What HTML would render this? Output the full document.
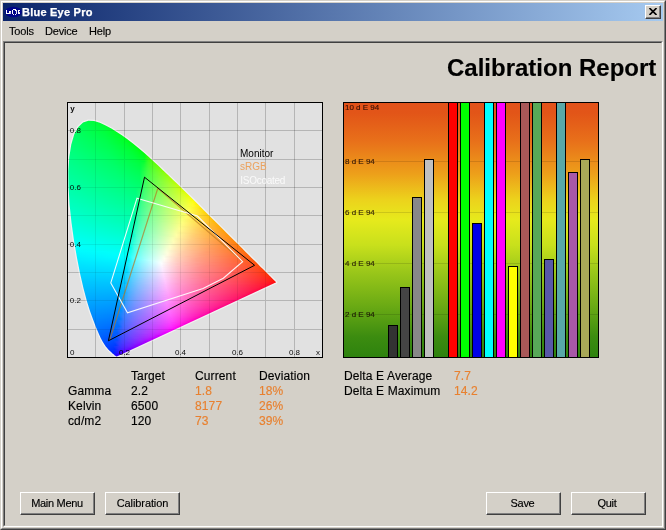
<!DOCTYPE html>
<html><head><meta charset="utf-8"><title>Blue Eye Pro</title>
<style>
html,body{margin:0;padding:0}
body{width:666px;height:530px;background:#d4d0c8;position:relative;overflow:hidden;font-family:"Liberation Sans",sans-serif;font-size:11px;color:#000}
.a{position:absolute}
.t,.btn,svg{will-change:transform}
.t,.btn{-webkit-text-stroke:0.15px currentColor}
.t{position:absolute;white-space:nowrap;line-height:1}
.o{color:#e8802f}
.r{font-size:12px;letter-spacing:0.12px}
.btn{letter-spacing:-0.3px;position:absolute;width:75px;height:23px;box-sizing:border-box;background:#d4d0c8;border:1px solid;border-color:#fff #404040 #404040 #fff;box-shadow:inset -1px -1px 0 #808080;text-align:center;line-height:21px;font-size:11px}
.bar{position:absolute;width:10px;box-sizing:border-box;border:1px solid #000;border-bottom:none}
</style></head><body>
<!-- window frame -->
<div class="a" style="left:0;top:0;width:666px;height:530px;box-sizing:border-box;border:1px solid;border-color:#d4d0c8 #404040 #404040 #d4d0c8"></div>
<div class="a" style="left:1px;top:1px;width:664px;height:528px;box-sizing:border-box;border:1px solid;border-color:#fff #808080 #808080 #fff"></div>
<!-- title bar -->
<div class="a" style="left:3px;top:3px;width:660px;height:18px;background:linear-gradient(90deg,#0a246a,#a6caf0)"></div>
<svg class="a" style="left:4px;top:5px" width="20" height="14" viewBox="4 5 20 14"><ellipse cx="13.4" cy="12" rx="8.5" ry="5.2" fill="#00058a"/><g fill="#fff" shape-rendering="crispEdges"><rect x="6" y="10" width="1" height="4"/><rect x="6" y="13" width="3" height="1"/><rect x="9" y="11" width="2" height="1"/><rect x="9" y="12" width="1" height="2"/><rect x="10" y="12" width="1" height="2" opacity=".8"/><rect x="13" y="9" width="3" height="1"/><rect x="12" y="10" width="1" height="4"/><rect x="15" y="10" width="1" height="1"/><rect x="13" y="14" width="1" height="1"/><rect x="15" y="14" width="1" height="1"/><rect x="16" y="10" width="1" height="4" opacity=".9"/><rect x="18" y="10" width="2" height="1"/><rect x="18" y="11" width="1" height="3"/><rect x="19" y="12" width="1" height="1" opacity=".8"/><rect x="18" y="13" width="2" height="1"/></g></svg>
<div class="t" id="ttl" style="left:21.5px;top:7px;-webkit-text-stroke:0.25px #fff;font-size:11px;font-weight:bold;color:#fff;letter-spacing:0.23px">Blue Eye Pro</div>
<!-- close button -->
<div class="a" style="left:645px;top:5px;width:16px;height:14px;box-sizing:border-box;background:#d4d0c8;border:1px solid;border-color:#fff #404040 #404040 #fff;box-shadow:inset -1px -1px 0 #808080"></div>
<svg class="a" style="left:649px;top:8px" width="8" height="7" viewBox="0 0 8 7"><path d="M0.5 0L7.5 7M7.5 0L0.5 7" stroke="#000" stroke-width="1.6" fill="none"/></svg>
<!-- menu -->
<div class="t" id="m1" style="letter-spacing:-0.2px;left:9px;top:26px">Tools</div>
<div class="t" id="m2" style="letter-spacing:-0.2px;left:45px;top:26px">Device</div>
<div class="t" id="m3" style="letter-spacing:-0.2px;left:89px;top:26px">Help</div>
<!-- client sunken -->
<div class="a" style="left:3px;top:41px;width:660px;height:486px;box-sizing:border-box;border:1px solid;border-color:#808080 #fff #fff #808080"></div>
<div class="a" style="left:4px;top:42px;width:658px;height:484px;box-sizing:border-box;border:1px solid;border-color:#404040 #d4d0c8 #d4d0c8 #404040"></div>
<div class="t" id="h1" style="right:10px;top:56px;font-size:24px;font-weight:bold">Calibration Report</div>
<!-- CIE chart -->
<svg class="a" style="left:67px;top:102px" width="256" height="256" viewBox="0 0 256 256">
<rect x="0" y="0" width="256" height="256" fill="#e1e1e1"/>
<g stroke="#000" stroke-opacity="0.125" stroke-width="1" shape-rendering="crispEdges">
<path d="M28.5 0V256M0 28.5H256"/><path d="M57.5 0V256M0 57.5H256"/><path d="M85.5 0V256M0 85.5H256"/><path d="M113.5 0V256M0 113.5H256"/><path d="M142.5 0V256M0 142.5H256"/><path d="M170.5 0V256M0 170.5H256"/><path d="M198.5 0V256M0 198.5H256"/><path d="M227.5 0V256M0 227.5H256"/>
</g>
<defs><clipPath id="hs"><path d="M49.8 254.4 L49.0 254.3 L48.3 253.8 L48.1 253.6 L47.8 253.4 L47.4 253.0 L47.1 252.7 L46.6 252.3 L46.1 251.9 L45.5 251.4 L44.8 250.8 L44.1 250.1 L43.2 249.3 L42.3 248.4 L41.3 247.4 L40.1 246.1 L38.8 244.5 L37.3 242.2 L35.6 239.4 L33.6 235.7 L31.5 231.1 L29.0 225.3 L26.3 218.1 L23.1 209.3 L19.8 198.7 L16.5 186.3 L13.2 171.9 L10.0 155.8 L7.0 138.4 L4.5 120.5 L2.6 102.7 L1.6 85.6 L1.4 69.6 L2.3 55.0 L4.3 42.4 L7.3 32.3 L11.4 24.9 L16.1 20.4 L21.4 18.7 L27.0 19.0 L32.8 20.8 L38.6 23.5 L44.3 26.6 L49.8 30.0 L55.2 33.5 L60.4 37.3 L65.6 41.3 L70.8 45.5 L75.9 49.8 L81.0 54.3 L86.1 58.9 L91.1 63.6 L96.2 68.4 L101.3 73.3 L106.4 78.2 L111.5 83.1 L116.5 88.1 L121.6 93.1 L126.6 98.0 L131.6 103.0 L136.5 107.9 L141.3 112.7 L146.1 117.4 L150.7 122.1 L155.2 126.6 L159.6 130.9 L163.9 135.2 L167.9 139.2 L171.8 143.0 L175.3 146.6 L178.6 149.9 L181.7 153.0 L184.6 155.9 L187.3 158.5 L189.7 160.8 L191.8 162.9 L193.7 164.9 L195.4 166.6 L197.0 168.1 L198.3 169.5 L199.6 170.7 L200.6 171.8 L201.6 172.8 L202.5 173.7 L203.4 174.5 L204.1 175.2 L204.8 175.9 L206.8 177.9 L207.9 179.0 L209.2 180.3Z"/></clipPath><linearGradient id="g0" gradientUnits="userSpaceOnUse" x1="19.5" x2="27.5"><stop offset="0" stop-color="#00ff46"/><stop offset="1" stop-color="#00ff3a"/></linearGradient><linearGradient id="g1" gradientUnits="userSpaceOnUse" x1="16.5" x2="31.0"><stop offset="0" stop-color="#00ff4b"/><stop offset="1" stop-color="#00ff36"/></linearGradient><linearGradient id="g2" gradientUnits="userSpaceOnUse" x1="15.0" x2="34.0"><stop offset="0" stop-color="#00ff4f"/><stop offset="1" stop-color="#00ff32"/></linearGradient><linearGradient id="g3" gradientUnits="userSpaceOnUse" x1="13.5" x2="36.0"><stop offset="0" stop-color="#00ff52"/><stop offset="1" stop-color="#00ff30"/></linearGradient><linearGradient id="g4" gradientUnits="userSpaceOnUse" x1="12.5" x2="38.5"><stop offset="0" stop-color="#00ff54"/><stop offset="0.769" stop-color="#00ff39"/><stop offset="1" stop-color="#00ff2d"/></linearGradient><linearGradient id="g5" gradientUnits="userSpaceOnUse" x1="11.5" x2="40.5"><stop offset="0" stop-color="#00ff57"/><stop offset="0.828" stop-color="#00ff36"/><stop offset="1" stop-color="#00ff2b"/></linearGradient><linearGradient id="g6" gradientUnits="userSpaceOnUse" x1="10.5" x2="42.0"><stop offset="0" stop-color="#00ff59"/><stop offset="0.762" stop-color="#00ff39"/><stop offset="1" stop-color="#00ff2a"/></linearGradient><linearGradient id="g7" gradientUnits="userSpaceOnUse" x1="10.0" x2="44.0"><stop offset="0" stop-color="#00ff5b"/><stop offset="0.706" stop-color="#00ff3c"/><stop offset="1" stop-color="#00ff28"/></linearGradient><linearGradient id="g8" gradientUnits="userSpaceOnUse" x1="9.5" x2="45.5"><stop offset="0" stop-color="#00ff5d"/><stop offset="0.778" stop-color="#00ff38"/><stop offset="1" stop-color="#00ff26"/></linearGradient><linearGradient id="g9" gradientUnits="userSpaceOnUse" x1="9.0" x2="47.5"><stop offset="0" stop-color="#00ff5e"/><stop offset="0.727" stop-color="#00ff3b"/><stop offset="1" stop-color="#00ff24"/></linearGradient><linearGradient id="g10" gradientUnits="userSpaceOnUse" x1="8.5" x2="49.0"><stop offset="0" stop-color="#00ff60"/><stop offset="0.691" stop-color="#00ff3e"/><stop offset="1" stop-color="#0f2"/></linearGradient><linearGradient id="g11" gradientUnits="userSpaceOnUse" x1="8.0" x2="50.5"><stop offset="0" stop-color="#00ff62"/><stop offset="0.753" stop-color="#00ff3a"/><stop offset="1" stop-color="#00ff21"/></linearGradient><linearGradient id="g12" gradientUnits="userSpaceOnUse" x1="7.5" x2="52.0"><stop offset="0" stop-color="#00ff64"/><stop offset="0.719" stop-color="#00ff3c"/><stop offset="1" stop-color="#00ff1f"/></linearGradient><linearGradient id="g13" gradientUnits="userSpaceOnUse" x1="6.5" x2="53.5"><stop offset="0" stop-color="#0f6"/><stop offset="0.681" stop-color="#00ff40"/><stop offset="0.936" stop-color="#00ff27"/><stop offset="1" stop-color="#00ff1e"/></linearGradient><linearGradient id="g14" gradientUnits="userSpaceOnUse" x1="6.5" x2="55.0"><stop offset="0" stop-color="#00ff67"/><stop offset="0.66" stop-color="#00ff42"/><stop offset="0.99" stop-color="#00ff1e"/><stop offset="1" stop-color="#00ff1c"/></linearGradient><linearGradient id="g15" gradientUnits="userSpaceOnUse" x1="6.0" x2="56.5"><stop offset="0" stop-color="#00ff69"/><stop offset="0.634" stop-color="#0f4"/><stop offset="0.871" stop-color="#00ff2e"/><stop offset="1" stop-color="#00ff1a"/></linearGradient><linearGradient id="g16" gradientUnits="userSpaceOnUse" x1="6.0" x2="58.0"><stop offset="0" stop-color="#00ff6a"/><stop offset="0.615" stop-color="#00ff46"/><stop offset="0.923" stop-color="#00ff27"/><stop offset="1" stop-color="#00ff18"/></linearGradient><linearGradient id="g17" gradientUnits="userSpaceOnUse" x1="5.5" x2="59.5"><stop offset="0" stop-color="#00ff6c"/><stop offset="0.667" stop-color="#00ff43"/><stop offset="0.963" stop-color="#00ff1f"/><stop offset="1" stop-color="#00ff16"/></linearGradient><linearGradient id="g18" gradientUnits="userSpaceOnUse" x1="5.0" x2="61.0"><stop offset="0" stop-color="#00ff6d"/><stop offset="0.571" stop-color="#00ff4b"/><stop offset="0.857" stop-color="#00ff2f"/><stop offset="1" stop-color="#00ff13"/></linearGradient><linearGradient id="g19" gradientUnits="userSpaceOnUse" x1="5.0" x2="62.0"><stop offset="0" stop-color="#00ff6e"/><stop offset="0.561" stop-color="#00ff4d"/><stop offset="0.842" stop-color="#00ff31"/><stop offset="0.982" stop-color="#00ff19"/><stop offset="1" stop-color="#00ff13"/></linearGradient><linearGradient id="g20" gradientUnits="userSpaceOnUse" x1="4.5" x2="63.5"><stop offset="0" stop-color="#00ff70"/><stop offset="0.61" stop-color="#00ff4a"/><stop offset="0.881" stop-color="#00ff2b"/><stop offset="0.949" stop-color="#00ff1f"/><stop offset="1" stop-color="#00ff10"/></linearGradient><linearGradient id="g21" gradientUnits="userSpaceOnUse" x1="4.0" x2="64.5"><stop offset="0" stop-color="#00ff72"/><stop offset="0.595" stop-color="#00ff4c"/><stop offset="0.86" stop-color="#00ff2f"/><stop offset="0.992" stop-color="#00ff14"/><stop offset="1" stop-color="#0f1"/></linearGradient><linearGradient id="g22" gradientUnits="userSpaceOnUse" x1="4.0" x2="66.0"><stop offset="0" stop-color="#00ff73"/><stop offset="0.581" stop-color="#00ff4e"/><stop offset="0.903" stop-color="#00ff28"/><stop offset="1" stop-color="#00ff0d"/></linearGradient><linearGradient id="g23" gradientUnits="userSpaceOnUse" x1="3.5" x2="67.0"><stop offset="0" stop-color="#00ff74"/><stop offset="0.567" stop-color="#00ff50"/><stop offset="0.882" stop-color="#00ff2c"/><stop offset="0.945" stop-color="#00ff20"/><stop offset="1" stop-color="#00ff0d"/></linearGradient><linearGradient id="g24" gradientUnits="userSpaceOnUse" x1="3.5" x2="68.5"><stop offset="0" stop-color="#00ff75"/><stop offset="0.554" stop-color="#00ff52"/><stop offset="0.862" stop-color="#00ff2f"/><stop offset="0.985" stop-color="#0f1"/><stop offset="1" stop-color="#00ff07"/></linearGradient><linearGradient id="g25" gradientUnits="userSpaceOnUse" x1="3.5" x2="69.5"><stop offset="0" stop-color="#0f7"/><stop offset="0.606" stop-color="#00ff4e"/><stop offset="0.848" stop-color="#00ff31"/><stop offset="0.97" stop-color="#00ff17"/><stop offset="1" stop-color="#00ff08"/></linearGradient><linearGradient id="g26" gradientUnits="userSpaceOnUse" x1="3.0" x2="71.0"><stop offset="0" stop-color="#00ff78"/><stop offset="0.588" stop-color="#00ff50"/><stop offset="0.824" stop-color="#00ff35"/><stop offset="0.941" stop-color="#00ff1e"/><stop offset="1" stop-color="#0f0"/></linearGradient><linearGradient id="g27" gradientUnits="userSpaceOnUse" x1="3.0" x2="72.0"><stop offset="0" stop-color="#00ff79"/><stop offset="0.58" stop-color="#00ff52"/><stop offset="0.87" stop-color="#00ff2e"/><stop offset="0.928" stop-color="#0f2"/><stop offset="0.986" stop-color="#00ff0e"/><stop offset="1" stop-color="#0f0"/></linearGradient><linearGradient id="g28" gradientUnits="userSpaceOnUse" x1="3.0" x2="73.5"><stop offset="0" stop-color="#00ff7b"/><stop offset="0.567" stop-color="#00ff53"/><stop offset="0.851" stop-color="#00ff31"/><stop offset="0.965" stop-color="#00ff15"/><stop offset="1" stop-color="#0f0"/></linearGradient><linearGradient id="g29" gradientUnits="userSpaceOnUse" x1="2.5" x2="74.5"><stop offset="0" stop-color="#00ff7c"/><stop offset="0.556" stop-color="#00ff56"/><stop offset="0.833" stop-color="#00ff35"/><stop offset="0.944" stop-color="#00ff1d"/><stop offset="1" stop-color="#0f0"/></linearGradient><linearGradient id="g30" gradientUnits="userSpaceOnUse" x1="2.5" x2="75.5"><stop offset="0" stop-color="#00ff7d"/><stop offset="0.548" stop-color="#00ff57"/><stop offset="0.822" stop-color="#00ff37"/><stop offset="0.932" stop-color="#00ff21"/><stop offset="1" stop-color="#0f0"/></linearGradient><linearGradient id="g31" gradientUnits="userSpaceOnUse" x1="2.5" x2="77.0"><stop offset="0" stop-color="#00ff7e"/><stop offset="0.537" stop-color="#00ff59"/><stop offset="0.805" stop-color="#00ff3a"/><stop offset="0.913" stop-color="#00ff25"/><stop offset="0.966" stop-color="#00ff13"/><stop offset="1" stop-color="#0f0"/></linearGradient><linearGradient id="g32" gradientUnits="userSpaceOnUse" x1="2.0" x2="78.0"><stop offset="0" stop-color="#00ff80"/><stop offset="0.526" stop-color="#00ff5b"/><stop offset="0.789" stop-color="#00ff3d"/><stop offset="0.895" stop-color="#00ff2a"/><stop offset="0.947" stop-color="#00ff1b"/><stop offset="1" stop-color="#0f0"/></linearGradient><linearGradient id="g33" gradientUnits="userSpaceOnUse" x1="2.0" x2="79.0"><stop offset="0" stop-color="#00ff81"/><stop offset="0.519" stop-color="#00ff5d"/><stop offset="0.831" stop-color="#00ff37"/><stop offset="0.935" stop-color="#00ff20"/><stop offset="0.987" stop-color="#0f0"/><stop offset="1" stop-color="#18ff00"/></linearGradient><linearGradient id="g34" gradientUnits="userSpaceOnUse" x1="2.0" x2="80.5"><stop offset="0" stop-color="#00ff82"/><stop offset="0.51" stop-color="#00ff5e"/><stop offset="0.815" stop-color="#00ff39"/><stop offset="0.917" stop-color="#00ff24"/><stop offset="0.968" stop-color="#00ff0f"/><stop offset="1" stop-color="#2bff00"/></linearGradient><linearGradient id="g35" gradientUnits="userSpaceOnUse" x1="1.5" x2="81.5"><stop offset="0" stop-color="#00ff84"/><stop offset="0.5" stop-color="#00ff60"/><stop offset="0.8" stop-color="#00ff3d"/><stop offset="0.9" stop-color="#00ff29"/><stop offset="0.95" stop-color="#00ff19"/><stop offset="1" stop-color="#34ff00"/></linearGradient><linearGradient id="g36" gradientUnits="userSpaceOnUse" x1="1.5" x2="82.5"><stop offset="0" stop-color="#00ff85"/><stop offset="0.543" stop-color="#00ff5d"/><stop offset="0.79" stop-color="#00ff3f"/><stop offset="0.938" stop-color="#00ff1e"/><stop offset="0.988" stop-color="#35ff00"/><stop offset="1" stop-color="#3cff00"/></linearGradient><linearGradient id="g37" gradientUnits="userSpaceOnUse" x1="1.5" x2="83.5"><stop offset="0" stop-color="#00ff86"/><stop offset="0.537" stop-color="#00ff5f"/><stop offset="0.829" stop-color="#00ff39"/><stop offset="0.927" stop-color="#0f2"/><stop offset="0.976" stop-color="#36ff0b"/><stop offset="1" stop-color="#43ff00"/></linearGradient><linearGradient id="g38" gradientUnits="userSpaceOnUse" x1="1.5" x2="84.5"><stop offset="0" stop-color="#00ff87"/><stop offset="0.53" stop-color="#00ff60"/><stop offset="0.819" stop-color="#00ff3b"/><stop offset="0.916" stop-color="#06ff26"/><stop offset="0.964" stop-color="#37ff14"/><stop offset="1" stop-color="#49ff00"/></linearGradient><linearGradient id="g39" gradientUnits="userSpaceOnUse" x1="1.5" x2="86.0"><stop offset="0" stop-color="#0f8"/><stop offset="0.521" stop-color="#00ff62"/><stop offset="0.805" stop-color="#00ff3e"/><stop offset="0.852" stop-color="#00ff35"/><stop offset="0.899" stop-color="#0cff2a"/><stop offset="0.947" stop-color="#39ff1a"/><stop offset="1" stop-color="#52ff00"/></linearGradient><linearGradient id="g40" gradientUnits="userSpaceOnUse" x1="1.5" x2="87.0"><stop offset="0" stop-color="#00ff8a"/><stop offset="0.515" stop-color="#00ff63"/><stop offset="0.795" stop-color="#00ff40"/><stop offset="0.842" stop-color="#00ff37"/><stop offset="0.889" stop-color="#10ff2d"/><stop offset="0.936" stop-color="#3aff1f"/><stop offset="0.982" stop-color="#50ff00"/><stop offset="1" stop-color="#58ff00"/></linearGradient><linearGradient id="g41" gradientUnits="userSpaceOnUse" x1="1.0" x2="88.0"><stop offset="0" stop-color="#00ff8b"/><stop offset="0.552" stop-color="#00ff61"/><stop offset="0.828" stop-color="#00ff3b"/><stop offset="0.874" stop-color="#01ff31"/><stop offset="0.92" stop-color="#38ff25"/><stop offset="1" stop-color="#5dff00"/></linearGradient><linearGradient id="g42" gradientUnits="userSpaceOnUse" x1="1.0" x2="89.0"><stop offset="0" stop-color="#00ff8c"/><stop offset="0.5" stop-color="#00ff67"/><stop offset="0.773" stop-color="#00ff45"/><stop offset="0.818" stop-color="#00ff3e"/><stop offset="0.864" stop-color="#0bff34"/><stop offset="0.909" stop-color="#39ff29"/><stop offset="0.955" stop-color="#50ff18"/><stop offset="1" stop-color="#62ff00"/></linearGradient><linearGradient id="g43" gradientUnits="userSpaceOnUse" x1="1.0" x2="90.0"><stop offset="0" stop-color="#00ff8d"/><stop offset="0.494" stop-color="#00ff68"/><stop offset="0.764" stop-color="#00ff48"/><stop offset="0.809" stop-color="#00ff40"/><stop offset="0.854" stop-color="#0fff37"/><stop offset="0.899" stop-color="#3aff2c"/><stop offset="0.944" stop-color="#51ff1d"/><stop offset="0.989" stop-color="#63ff00"/><stop offset="1" stop-color="#67ff00"/></linearGradient><linearGradient id="g44" gradientUnits="userSpaceOnUse" x1="1.0" x2="91.0"><stop offset="0" stop-color="#00ff8e"/><stop offset="0.489" stop-color="#00ff6a"/><stop offset="0.756" stop-color="#00ff4a"/><stop offset="0.8" stop-color="#00ff42"/><stop offset="0.844" stop-color="#13ff3a"/><stop offset="0.889" stop-color="#3bff2f"/><stop offset="0.933" stop-color="#52ff22"/><stop offset="0.978" stop-color="#64ff05"/><stop offset="1" stop-color="#6cff00"/></linearGradient><linearGradient id="g45" gradientUnits="userSpaceOnUse" x1="1.0" x2="92.5"><stop offset="0" stop-color="#00ff90"/><stop offset="0.525" stop-color="#00ff67"/><stop offset="0.787" stop-color="#0f4"/><stop offset="0.831" stop-color="#16ff3c"/><stop offset="0.874" stop-color="#3cff32"/><stop offset="0.918" stop-color="#53ff26"/><stop offset="1" stop-color="#72ff00"/></linearGradient><linearGradient id="g46" gradientUnits="userSpaceOnUse" x1="1.0" x2="93.5"><stop offset="0" stop-color="#00ff91"/><stop offset="0.519" stop-color="#00ff69"/><stop offset="0.778" stop-color="#00ff47"/><stop offset="0.822" stop-color="#18ff3f"/><stop offset="0.865" stop-color="#3dff35"/><stop offset="0.951" stop-color="#66ff19"/><stop offset="1" stop-color="#7f0"/></linearGradient><linearGradient id="g47" gradientUnits="userSpaceOnUse" x1="1.0" x2="94.5"><stop offset="0" stop-color="#00ff92"/><stop offset="0.513" stop-color="#00ff6a"/><stop offset="0.77" stop-color="#00ff49"/><stop offset="0.813" stop-color="#1bff41"/><stop offset="0.856" stop-color="#3fff38"/><stop offset="0.941" stop-color="#67ff1e"/><stop offset="0.984" stop-color="#76ff00"/><stop offset="1" stop-color="#7bff00"/></linearGradient><linearGradient id="g48" gradientUnits="userSpaceOnUse" x1="1.0" x2="95.5"><stop offset="0" stop-color="#00ff93"/><stop offset="0.508" stop-color="#00ff6c"/><stop offset="0.762" stop-color="#00ff4b"/><stop offset="0.847" stop-color="#40ff3b"/><stop offset="0.931" stop-color="#67ff23"/><stop offset="0.974" stop-color="#77ff07"/><stop offset="1" stop-color="#80ff00"/></linearGradient><linearGradient id="g49" gradientUnits="userSpaceOnUse" x1="1.0" x2="96.5"><stop offset="0" stop-color="#00ff94"/><stop offset="0.503" stop-color="#00ff6d"/><stop offset="0.754" stop-color="#00ff4d"/><stop offset="0.838" stop-color="#41ff3d"/><stop offset="0.921" stop-color="#68ff27"/><stop offset="1" stop-color="#84ff00"/></linearGradient><linearGradient id="g50" gradientUnits="userSpaceOnUse" x1="0.5" x2="97.5"><stop offset="0" stop-color="#00ff96"/><stop offset="0.495" stop-color="#00ff6f"/><stop offset="0.742" stop-color="#00ff50"/><stop offset="0.784" stop-color="#1aff49"/><stop offset="0.825" stop-color="#3fff41"/><stop offset="0.907" stop-color="#67ff2c"/><stop offset="0.948" stop-color="#77ff1c"/><stop offset="0.99" stop-color="#85ff00"/><stop offset="1" stop-color="#8f0"/></linearGradient><linearGradient id="g51" gradientUnits="userSpaceOnUse" x1="0.5" x2="98.5"><stop offset="0" stop-color="#00ff97"/><stop offset="0.49" stop-color="#00ff71"/><stop offset="0.735" stop-color="#00ff52"/><stop offset="0.816" stop-color="#40ff43"/><stop offset="0.898" stop-color="#68ff30"/><stop offset="0.939" stop-color="#78ff21"/><stop offset="0.98" stop-color="#86ff00"/><stop offset="1" stop-color="#8cff00"/></linearGradient><linearGradient id="g52" gradientUnits="userSpaceOnUse" x1="0.5" x2="99.5"><stop offset="0" stop-color="#00ff98"/><stop offset="0.485" stop-color="#00ff72"/><stop offset="0.727" stop-color="#00ff54"/><stop offset="0.808" stop-color="#41ff46"/><stop offset="0.889" stop-color="#69ff33"/><stop offset="0.929" stop-color="#79ff26"/><stop offset="1" stop-color="#91ff00"/></linearGradient><linearGradient id="g53" gradientUnits="userSpaceOnUse" x1="0.5" x2="100.5"><stop offset="0" stop-color="#0f9"/><stop offset="0.48" stop-color="#00ff74"/><stop offset="0.72" stop-color="#00ff56"/><stop offset="0.8" stop-color="#42ff48"/><stop offset="0.88" stop-color="#6aff36"/><stop offset="0.92" stop-color="#7aff2a"/><stop offset="1" stop-color="#95ff00"/></linearGradient><linearGradient id="g54" gradientUnits="userSpaceOnUse" x1="0.5" x2="102.0"><stop offset="0" stop-color="#00ff9a"/><stop offset="0.473" stop-color="#00ff75"/><stop offset="0.709" stop-color="#00ff58"/><stop offset="0.788" stop-color="#43ff4a"/><stop offset="0.867" stop-color="#6bff39"/><stop offset="0.946" stop-color="#88ff1d"/><stop offset="0.985" stop-color="#96ff00"/><stop offset="1" stop-color="#9aff00"/></linearGradient><linearGradient id="g55" gradientUnits="userSpaceOnUse" x1="0.5" x2="103.0"><stop offset="0" stop-color="#00ff9c"/><stop offset="0.507" stop-color="#00ff73"/><stop offset="0.702" stop-color="#00ff5a"/><stop offset="0.78" stop-color="#44ff4d"/><stop offset="0.859" stop-color="#6cff3c"/><stop offset="0.937" stop-color="#89ff22"/><stop offset="0.976" stop-color="#96ff00"/><stop offset="1" stop-color="#9eff00"/></linearGradient><linearGradient id="g56" gradientUnits="userSpaceOnUse" x1="0.5" x2="104.0"><stop offset="0" stop-color="#00ff9d"/><stop offset="0.464" stop-color="#00ff78"/><stop offset="0.696" stop-color="#00ff5c"/><stop offset="0.773" stop-color="#46ff4f"/><stop offset="0.889" stop-color="#7cff34"/><stop offset="0.928" stop-color="#8aff27"/><stop offset="1" stop-color="#a2ff00"/></linearGradient><linearGradient id="g57" gradientUnits="userSpaceOnUse" x1="0.5" x2="105.0"><stop offset="0" stop-color="#00ff9e"/><stop offset="0.498" stop-color="#00ff76"/><stop offset="0.689" stop-color="#00ff5e"/><stop offset="0.727" stop-color="#28ff58"/><stop offset="0.766" stop-color="#47ff51"/><stop offset="0.88" stop-color="#7dff37"/><stop offset="0.919" stop-color="#8bff2b"/><stop offset="1" stop-color="#a6ff00"/></linearGradient><linearGradient id="g58" gradientUnits="userSpaceOnUse" x1="0.5" x2="106.0"><stop offset="0" stop-color="#00ff9f"/><stop offset="0.493" stop-color="#0f7"/><stop offset="0.682" stop-color="#00ff5f"/><stop offset="0.72" stop-color="#2aff59"/><stop offset="0.758" stop-color="#48ff53"/><stop offset="0.872" stop-color="#7eff3a"/><stop offset="0.948" stop-color="#99ff1e"/><stop offset="0.986" stop-color="#a6ff00"/><stop offset="1" stop-color="#af0"/></linearGradient><linearGradient id="g59" gradientUnits="userSpaceOnUse" x1="0.5" x2="107.0"><stop offset="0" stop-color="#00ffa0"/><stop offset="0.488" stop-color="#00ff79"/><stop offset="0.676" stop-color="#00ff61"/><stop offset="0.714" stop-color="#2bff5b"/><stop offset="0.751" stop-color="#49ff55"/><stop offset="0.864" stop-color="#7fff3d"/><stop offset="0.939" stop-color="#9aff23"/><stop offset="0.977" stop-color="#a7ff00"/><stop offset="1" stop-color="#aeff00"/></linearGradient><linearGradient id="g60" gradientUnits="userSpaceOnUse" x1="0.5" x2="108.0"><stop offset="0" stop-color="#00ffa2"/><stop offset="0.484" stop-color="#00ff7a"/><stop offset="0.67" stop-color="#00ff63"/><stop offset="0.707" stop-color="#2dff5d"/><stop offset="0.744" stop-color="#4aff57"/><stop offset="0.856" stop-color="#80ff40"/><stop offset="0.93" stop-color="#9bff28"/><stop offset="1" stop-color="#b2ff00"/></linearGradient><linearGradient id="g61" gradientUnits="userSpaceOnUse" x1="1.0" x2="109.0"><stop offset="0" stop-color="#00ffa3"/><stop offset="0.481" stop-color="#00ff7b"/><stop offset="0.667" stop-color="#00ff64"/><stop offset="0.704" stop-color="#33ff5f"/><stop offset="0.741" stop-color="#4eff58"/><stop offset="0.852" stop-color="#83ff41"/><stop offset="0.926" stop-color="#9eff2a"/><stop offset="1" stop-color="#b6ff00"/></linearGradient><linearGradient id="g62" gradientUnits="userSpaceOnUse" x1="1.0" x2="110.0"><stop offset="0" stop-color="#00ffa4"/><stop offset="0.514" stop-color="#00ff79"/><stop offset="0.661" stop-color="#0f6"/><stop offset="0.697" stop-color="#34ff61"/><stop offset="0.734" stop-color="#4fff5a"/><stop offset="0.844" stop-color="#84ff44"/><stop offset="0.917" stop-color="#9fff2e"/><stop offset="0.954" stop-color="#abff1d"/><stop offset="0.991" stop-color="#b7ff00"/><stop offset="1" stop-color="#baff00"/></linearGradient><linearGradient id="g63" gradientUnits="userSpaceOnUse" x1="1.0" x2="111.0"><stop offset="0" stop-color="#00ffa5"/><stop offset="0.473" stop-color="#00ff7e"/><stop offset="0.655" stop-color="#00ff68"/><stop offset="0.691" stop-color="#36ff62"/><stop offset="0.764" stop-color="#64ff56"/><stop offset="0.909" stop-color="#a0ff32"/><stop offset="0.945" stop-color="#acff22"/><stop offset="0.982" stop-color="#b8ff00"/><stop offset="1" stop-color="#bdff00"/></linearGradient><linearGradient id="g64" gradientUnits="userSpaceOnUse" x1="1.0" x2="112.0"><stop offset="0" stop-color="#00ffa6"/><stop offset="0.505" stop-color="#00ff7c"/><stop offset="0.649" stop-color="#00ff6a"/><stop offset="0.685" stop-color="#37ff64"/><stop offset="0.757" stop-color="#65ff58"/><stop offset="0.901" stop-color="#a1ff35"/><stop offset="0.937" stop-color="#adff27"/><stop offset="0.973" stop-color="#b9ff0d"/><stop offset="1" stop-color="#c1ff00"/></linearGradient><linearGradient id="g65" gradientUnits="userSpaceOnUse" x1="1.0" x2="113.0"><stop offset="0" stop-color="#00ffa7"/><stop offset="0.5" stop-color="#00ff7e"/><stop offset="0.643" stop-color="#00ff6c"/><stop offset="0.679" stop-color="#39ff66"/><stop offset="0.75" stop-color="#66ff5a"/><stop offset="0.893" stop-color="#a2ff38"/><stop offset="0.929" stop-color="#aeff2b"/><stop offset="1" stop-color="#c5ff00"/></linearGradient><linearGradient id="g66" gradientUnits="userSpaceOnUse" x1="1.0" x2="114.0"><stop offset="0" stop-color="#00ffa9"/><stop offset="0.496" stop-color="#00ff7f"/><stop offset="0.637" stop-color="#00ff6d"/><stop offset="0.673" stop-color="#3aff68"/><stop offset="0.708" stop-color="#54ff62"/><stop offset="0.85" stop-color="#96ff46"/><stop offset="0.92" stop-color="#afff2f"/><stop offset="0.956" stop-color="#bbff1e"/><stop offset="0.991" stop-color="#c6ff00"/><stop offset="1" stop-color="#c9ff00"/></linearGradient><linearGradient id="g67" gradientUnits="userSpaceOnUse" x1="1.0" x2="115.0"><stop offset="0" stop-color="#0fa"/><stop offset="0.526" stop-color="#00ff7d"/><stop offset="0.632" stop-color="#00ff6f"/><stop offset="0.667" stop-color="#3bff6a"/><stop offset="0.702" stop-color="#55ff64"/><stop offset="0.842" stop-color="#97ff48"/><stop offset="0.912" stop-color="#b0ff33"/><stop offset="0.947" stop-color="#bcff23"/><stop offset="0.982" stop-color="#c7ff00"/><stop offset="1" stop-color="#cdff00"/></linearGradient><linearGradient id="g68" gradientUnits="userSpaceOnUse" x1="1.0" x2="116.0"><stop offset="0" stop-color="#00ffab"/><stop offset="0.452" stop-color="#00ff86"/><stop offset="0.591" stop-color="#00ff76"/><stop offset="0.626" stop-color="#09ff71"/><stop offset="0.661" stop-color="#3dff6c"/><stop offset="0.73" stop-color="#69ff60"/><stop offset="0.87" stop-color="#a5ff42"/><stop offset="0.939" stop-color="#bdff28"/><stop offset="0.974" stop-color="#c9ff0e"/><stop offset="1" stop-color="#d1ff00"/></linearGradient><linearGradient id="g69" gradientUnits="userSpaceOnUse" x1="1.0" x2="117.0"><stop offset="0" stop-color="#00ffac"/><stop offset="0.448" stop-color="#0f8"/><stop offset="0.586" stop-color="#0f7"/><stop offset="0.621" stop-color="#0fff73"/><stop offset="0.655" stop-color="#3eff6e"/><stop offset="0.724" stop-color="#6aff62"/><stop offset="0.862" stop-color="#a6ff44"/><stop offset="0.931" stop-color="#beff2c"/><stop offset="1" stop-color="#d5ff00"/></linearGradient><linearGradient id="g70" gradientUnits="userSpaceOnUse" x1="1.0" x2="118.0"><stop offset="0" stop-color="#00ffad"/><stop offset="0.444" stop-color="#00ff89"/><stop offset="0.581" stop-color="#00ff79"/><stop offset="0.615" stop-color="#13ff74"/><stop offset="0.65" stop-color="#3fff70"/><stop offset="0.718" stop-color="#6bff64"/><stop offset="0.855" stop-color="#a7ff47"/><stop offset="0.923" stop-color="#bfff31"/><stop offset="0.957" stop-color="#cbff1f"/><stop offset="0.991" stop-color="#d6ff00"/><stop offset="1" stop-color="#d9ff00"/></linearGradient><linearGradient id="g71" gradientUnits="userSpaceOnUse" x1="1.0" x2="119.0"><stop offset="0" stop-color="#00ffaf"/><stop offset="0.475" stop-color="#00ff87"/><stop offset="0.576" stop-color="#00ff7b"/><stop offset="0.61" stop-color="#16ff76"/><stop offset="0.644" stop-color="#40ff71"/><stop offset="0.712" stop-color="#6cff67"/><stop offset="0.847" stop-color="#a8ff4a"/><stop offset="0.915" stop-color="#c0ff34"/><stop offset="0.949" stop-color="#ccff24"/><stop offset="0.983" stop-color="#d7ff00"/><stop offset="1" stop-color="#df0"/></linearGradient><linearGradient id="g72" gradientUnits="userSpaceOnUse" x1="1.0" x2="120.0"><stop offset="0" stop-color="#00ffb0"/><stop offset="0.471" stop-color="#00ff89"/><stop offset="0.571" stop-color="#00ff7d"/><stop offset="0.605" stop-color="#19ff78"/><stop offset="0.639" stop-color="#42ff73"/><stop offset="0.706" stop-color="#6dff68"/><stop offset="0.84" stop-color="#a9ff4d"/><stop offset="0.941" stop-color="#cdff29"/><stop offset="1" stop-color="#e1ff00"/></linearGradient><linearGradient id="g73" gradientUnits="userSpaceOnUse" x1="1.0" x2="121.0"><stop offset="0" stop-color="#00ffb1"/><stop offset="0.433" stop-color="#00ff8e"/><stop offset="0.567" stop-color="#00ff7e"/><stop offset="0.6" stop-color="#1cff7a"/><stop offset="0.633" stop-color="#43ff75"/><stop offset="0.7" stop-color="#6eff6a"/><stop offset="0.833" stop-color="#aaff4f"/><stop offset="0.933" stop-color="#ceff2e"/><stop offset="1" stop-color="#e5ff00"/></linearGradient><linearGradient id="g74" gradientUnits="userSpaceOnUse" x1="1.0" x2="122.0"><stop offset="0" stop-color="#00ffb2"/><stop offset="0.463" stop-color="#00ff8c"/><stop offset="0.562" stop-color="#00ff80"/><stop offset="0.595" stop-color="#1eff7c"/><stop offset="0.628" stop-color="#4f7"/><stop offset="0.694" stop-color="#70ff6c"/><stop offset="0.826" stop-color="#abff52"/><stop offset="0.926" stop-color="#cfff32"/><stop offset="0.959" stop-color="#dbff20"/><stop offset="0.992" stop-color="#e6ff00"/><stop offset="1" stop-color="#e9ff00"/></linearGradient><linearGradient id="g75" gradientUnits="userSpaceOnUse" x1="1.5" x2="123.5"><stop offset="0" stop-color="#00ffb3"/><stop offset="0.459" stop-color="#00ff8d"/><stop offset="0.557" stop-color="#00ff81"/><stop offset="0.623" stop-color="#49ff78"/><stop offset="0.689" stop-color="#73ff6e"/><stop offset="0.852" stop-color="#baff4b"/><stop offset="0.918" stop-color="#d2ff34"/><stop offset="0.951" stop-color="#ddff23"/><stop offset="0.984" stop-color="#e9ff00"/><stop offset="1" stop-color="#ef0"/></linearGradient><linearGradient id="g76" gradientUnits="userSpaceOnUse" x1="1.5" x2="124.5"><stop offset="0" stop-color="#00ffb5"/><stop offset="0.455" stop-color="#00ff8f"/><stop offset="0.553" stop-color="#00ff83"/><stop offset="0.585" stop-color="#29ff7e"/><stop offset="0.618" stop-color="#4aff7a"/><stop offset="0.683" stop-color="#74ff70"/><stop offset="0.846" stop-color="#bbff4d"/><stop offset="0.911" stop-color="#d3ff38"/><stop offset="0.943" stop-color="#dfff28"/><stop offset="0.976" stop-color="#eaff09"/><stop offset="1" stop-color="#f2ff00"/></linearGradient><linearGradient id="g77" gradientUnits="userSpaceOnUse" x1="1.5" x2="125.5"><stop offset="0" stop-color="#00ffb6"/><stop offset="0.452" stop-color="#00ff90"/><stop offset="0.548" stop-color="#00ff85"/><stop offset="0.581" stop-color="#2bff80"/><stop offset="0.613" stop-color="#4bff7c"/><stop offset="0.677" stop-color="#75ff72"/><stop offset="0.806" stop-color="#b0ff58"/><stop offset="0.903" stop-color="#d4ff3b"/><stop offset="0.935" stop-color="#e0ff2d"/><stop offset="1" stop-color="#f6ff00"/></linearGradient><linearGradient id="g78" gradientUnits="userSpaceOnUse" x1="1.5" x2="126.5"><stop offset="0" stop-color="#00ffb7"/><stop offset="0.448" stop-color="#00ff92"/><stop offset="0.544" stop-color="#00ff86"/><stop offset="0.576" stop-color="#2dff82"/><stop offset="0.608" stop-color="#4dff7e"/><stop offset="0.704" stop-color="#86ff6e"/><stop offset="0.864" stop-color="#caff4a"/><stop offset="0.928" stop-color="#e1ff31"/><stop offset="0.96" stop-color="#ecff1e"/><stop offset="0.992" stop-color="#f7ff00"/><stop offset="1" stop-color="#faff00"/></linearGradient><linearGradient id="g79" gradientUnits="userSpaceOnUse" x1="1.5" x2="127.5"><stop offset="0" stop-color="#00ffb9"/><stop offset="0.476" stop-color="#00ff90"/><stop offset="0.54" stop-color="#0f8"/><stop offset="0.571" stop-color="#2eff84"/><stop offset="0.603" stop-color="#4eff7f"/><stop offset="0.698" stop-color="#88ff70"/><stop offset="0.857" stop-color="#cbff4c"/><stop offset="0.921" stop-color="#e2ff35"/><stop offset="0.952" stop-color="#eeff24"/><stop offset="0.984" stop-color="#f9ff00"/><stop offset="1" stop-color="#feff00"/></linearGradient><linearGradient id="g80" gradientUnits="userSpaceOnUse" x1="1.5" x2="128.5"><stop offset="0" stop-color="#00ffba"/><stop offset="0.441" stop-color="#00ff95"/><stop offset="0.535" stop-color="#00ff8a"/><stop offset="0.567" stop-color="#30ff86"/><stop offset="0.598" stop-color="#4fff81"/><stop offset="0.693" stop-color="#89ff72"/><stop offset="0.85" stop-color="#ccff4f"/><stop offset="0.945" stop-color="#efff2a"/><stop offset="0.976" stop-color="#faff0b"/><stop offset="1" stop-color="#fffc00"/></linearGradient><linearGradient id="g81" gradientUnits="userSpaceOnUse" x1="1.5" x2="129.5"><stop offset="0" stop-color="#0fb"/><stop offset="0.438" stop-color="#00ff97"/><stop offset="0.531" stop-color="#00ff8b"/><stop offset="0.562" stop-color="#32ff87"/><stop offset="0.594" stop-color="#50ff83"/><stop offset="0.688" stop-color="#8aff74"/><stop offset="0.844" stop-color="#cdff52"/><stop offset="0.938" stop-color="#f0ff2e"/><stop offset="0.969" stop-color="#fcff17"/><stop offset="1" stop-color="#fff800"/></linearGradient><linearGradient id="g82" gradientUnits="userSpaceOnUse" x1="1.5" x2="130.5"><stop offset="0" stop-color="#00ffbc"/><stop offset="0.434" stop-color="#00ff98"/><stop offset="0.527" stop-color="#00ff8d"/><stop offset="0.558" stop-color="#33ff89"/><stop offset="0.589" stop-color="#51ff85"/><stop offset="0.651" stop-color="#7aff7b"/><stop offset="0.775" stop-color="#b5ff64"/><stop offset="0.899" stop-color="#e6ff41"/><stop offset="0.961" stop-color="#fdff1f"/><stop offset="0.992" stop-color="#fff600"/><stop offset="1" stop-color="#fff400"/></linearGradient><linearGradient id="g83" gradientUnits="userSpaceOnUse" x1="2.0" x2="131.5"><stop offset="0" stop-color="#00ffbe"/><stop offset="0.463" stop-color="#00ff96"/><stop offset="0.525" stop-color="#00ff8e"/><stop offset="0.556" stop-color="#39ff8a"/><stop offset="0.587" stop-color="#56ff86"/><stop offset="0.68" stop-color="#8eff78"/><stop offset="0.834" stop-color="#d1ff56"/><stop offset="0.927" stop-color="#f5ff35"/><stop offset="0.958" stop-color="#fffe23"/><stop offset="0.988" stop-color="#fff300"/><stop offset="1" stop-color="#fff000"/></linearGradient><linearGradient id="g84" gradientUnits="userSpaceOnUse" x1="2.0" x2="132.5"><stop offset="0" stop-color="#00ffbf"/><stop offset="0.46" stop-color="#00ff98"/><stop offset="0.521" stop-color="#00ff90"/><stop offset="0.552" stop-color="#3bff8c"/><stop offset="0.582" stop-color="#57ff88"/><stop offset="0.674" stop-color="#8fff7a"/><stop offset="0.858" stop-color="#dfff50"/><stop offset="0.92" stop-color="#f6ff39"/><stop offset="0.95" stop-color="#fffd28"/><stop offset="0.981" stop-color="#fff200"/><stop offset="1" stop-color="#ffec00"/></linearGradient><linearGradient id="g85" gradientUnits="userSpaceOnUse" x1="2.0" x2="133.5"><stop offset="0" stop-color="#00ffc0"/><stop offset="0.426" stop-color="#00ff9d"/><stop offset="0.517" stop-color="#00ff92"/><stop offset="0.548" stop-color="#3cff8e"/><stop offset="0.578" stop-color="#58ff8a"/><stop offset="0.669" stop-color="#90ff7c"/><stop offset="0.852" stop-color="#e0ff53"/><stop offset="0.913" stop-color="#f7ff3d"/><stop offset="0.943" stop-color="#fffb2d"/><stop offset="1" stop-color="#ffe800"/></linearGradient><linearGradient id="g86" gradientUnits="userSpaceOnUse" x1="2.0" x2="134.5"><stop offset="0" stop-color="#00ffc1"/><stop offset="0.423" stop-color="#00ff9e"/><stop offset="0.513" stop-color="#00ff94"/><stop offset="0.543" stop-color="#3eff90"/><stop offset="0.604" stop-color="#6eff87"/><stop offset="0.725" stop-color="#aeff73"/><stop offset="0.875" stop-color="#edff4c"/><stop offset="0.936" stop-color="#fffa31"/><stop offset="1" stop-color="#ffe500"/></linearGradient><linearGradient id="g87" gradientUnits="userSpaceOnUse" x1="2.0" x2="135.5"><stop offset="0" stop-color="#00ffc3"/><stop offset="0.449" stop-color="#00ff9d"/><stop offset="0.509" stop-color="#00ff95"/><stop offset="0.539" stop-color="#3fff91"/><stop offset="0.599" stop-color="#70ff89"/><stop offset="0.719" stop-color="#afff75"/><stop offset="0.869" stop-color="#efff4f"/><stop offset="0.899" stop-color="#faff44"/><stop offset="0.959" stop-color="#fe2"/><stop offset="0.989" stop-color="#ffe500"/><stop offset="1" stop-color="#ffe100"/></linearGradient><linearGradient id="g88" gradientUnits="userSpaceOnUse" x1="2.0" x2="136.5"><stop offset="0" stop-color="#00ffc4"/><stop offset="0.416" stop-color="#00ffa2"/><stop offset="0.476" stop-color="#00ff9b"/><stop offset="0.506" stop-color="#0bff97"/><stop offset="0.535" stop-color="#41ff93"/><stop offset="0.595" stop-color="#71ff8b"/><stop offset="0.714" stop-color="#b1ff77"/><stop offset="0.862" stop-color="#f0ff52"/><stop offset="0.892" stop-color="#fcff48"/><stop offset="0.952" stop-color="#ffed27"/><stop offset="0.981" stop-color="#ffe300"/><stop offset="1" stop-color="#ffde00"/></linearGradient><linearGradient id="g89" gradientUnits="userSpaceOnUse" x1="2.5" x2="137.5"><stop offset="0" stop-color="#00ffc5"/><stop offset="0.415" stop-color="#00ffa3"/><stop offset="0.474" stop-color="#00ff9c"/><stop offset="0.504" stop-color="#1cff98"/><stop offset="0.533" stop-color="#46ff95"/><stop offset="0.593" stop-color="#74ff8c"/><stop offset="0.711" stop-color="#b4ff78"/><stop offset="0.859" stop-color="#f3ff54"/><stop offset="0.889" stop-color="#ffff4a"/><stop offset="0.948" stop-color="#ffea29"/><stop offset="0.978" stop-color="#ffe10d"/><stop offset="1" stop-color="#ffda00"/></linearGradient><linearGradient id="g90" gradientUnits="userSpaceOnUse" x1="2.5" x2="138.5"><stop offset="0" stop-color="#00ffc7"/><stop offset="0.441" stop-color="#00ffa1"/><stop offset="0.471" stop-color="#00ff9e"/><stop offset="0.5" stop-color="#1fff9a"/><stop offset="0.529" stop-color="#47ff96"/><stop offset="0.588" stop-color="#75ff8e"/><stop offset="0.706" stop-color="#b5ff7b"/><stop offset="0.853" stop-color="#f4ff57"/><stop offset="0.882" stop-color="#fffe4d"/><stop offset="0.941" stop-color="#ffe92e"/><stop offset="1" stop-color="#ffd700"/></linearGradient><linearGradient id="g91" gradientUnits="userSpaceOnUse" x1="2.5" x2="139.5"><stop offset="0" stop-color="#00ffc8"/><stop offset="0.467" stop-color="#00ffa0"/><stop offset="0.496" stop-color="#21ff9c"/><stop offset="0.526" stop-color="#49ff98"/><stop offset="0.584" stop-color="#77ff90"/><stop offset="0.701" stop-color="#b6ff7d"/><stop offset="0.847" stop-color="#f6ff5a"/><stop offset="0.876" stop-color="#fffc4f"/><stop offset="0.934" stop-color="#ffe732"/><stop offset="0.964" stop-color="#ffde1e"/><stop offset="0.993" stop-color="#ffd600"/><stop offset="1" stop-color="#ffd400"/></linearGradient><linearGradient id="g92" gradientUnits="userSpaceOnUse" x1="2.5" x2="140.5"><stop offset="0" stop-color="#00ffc9"/><stop offset="0.435" stop-color="#00ffa5"/><stop offset="0.464" stop-color="#00ffa1"/><stop offset="0.522" stop-color="#4aff9a"/><stop offset="0.58" stop-color="#78ff92"/><stop offset="0.696" stop-color="#b7ff7f"/><stop offset="0.841" stop-color="#f7ff5d"/><stop offset="0.87" stop-color="#fffb52"/><stop offset="0.957" stop-color="#ffdd23"/><stop offset="0.986" stop-color="#ffd400"/><stop offset="1" stop-color="#ffd100"/></linearGradient><linearGradient id="g93" gradientUnits="userSpaceOnUse" x1="2.5" x2="141.5"><stop offset="0" stop-color="#00ffcb"/><stop offset="0.46" stop-color="#00ffa3"/><stop offset="0.518" stop-color="#4cff9c"/><stop offset="0.604" stop-color="#8bff90"/><stop offset="0.806" stop-color="#edff68"/><stop offset="0.863" stop-color="#fff955"/><stop offset="0.95" stop-color="#ffdb28"/><stop offset="0.978" stop-color="#ffd30e"/><stop offset="1" stop-color="#ffcd00"/></linearGradient><linearGradient id="g94" gradientUnits="userSpaceOnUse" x1="3.0" x2="142.5"><stop offset="0" stop-color="#0fc"/><stop offset="0.43" stop-color="#00ffa8"/><stop offset="0.459" stop-color="#00ffa4"/><stop offset="0.487" stop-color="#2effa1"/><stop offset="0.516" stop-color="#50ff9d"/><stop offset="0.573" stop-color="#7cff95"/><stop offset="0.688" stop-color="#bbff83"/><stop offset="0.832" stop-color="#fcff61"/><stop offset="0.946" stop-color="#ffd92a"/><stop offset="1" stop-color="#ffca00"/></linearGradient><linearGradient id="g95" gradientUnits="userSpaceOnUse" x1="3.0" x2="143.5"><stop offset="0" stop-color="#00ffcd"/><stop offset="0.399" stop-color="#00ffac"/><stop offset="0.456" stop-color="#00ffa6"/><stop offset="0.484" stop-color="#30ffa3"/><stop offset="0.512" stop-color="#52ff9f"/><stop offset="0.569" stop-color="#7eff97"/><stop offset="0.74" stop-color="#d8ff79"/><stop offset="0.826" stop-color="#fdff64"/><stop offset="0.94" stop-color="#ffd82e"/><stop offset="1" stop-color="#ffc700"/></linearGradient><linearGradient id="g96" gradientUnits="userSpaceOnUse" x1="3.0" x2="144.5"><stop offset="0" stop-color="#00ffcf"/><stop offset="0.424" stop-color="#00ffab"/><stop offset="0.452" stop-color="#00ffa8"/><stop offset="0.481" stop-color="#32ffa5"/><stop offset="0.509" stop-color="#53ffa1"/><stop offset="0.565" stop-color="#7fff99"/><stop offset="0.678" stop-color="#beff87"/><stop offset="0.82" stop-color="#ffff67"/><stop offset="0.933" stop-color="#ffd632"/><stop offset="0.961" stop-color="#ffce20"/><stop offset="0.989" stop-color="#ffc700"/><stop offset="1" stop-color="#ffc400"/></linearGradient><linearGradient id="g97" gradientUnits="userSpaceOnUse" x1="3.0" x2="145.5"><stop offset="0" stop-color="#00ffd0"/><stop offset="0.449" stop-color="#0fa"/><stop offset="0.477" stop-color="#34ffa6"/><stop offset="0.505" stop-color="#54ffa3"/><stop offset="0.561" stop-color="#80ff9b"/><stop offset="0.674" stop-color="#bfff89"/><stop offset="0.814" stop-color="#fffd69"/><stop offset="0.954" stop-color="#ffcd25"/><stop offset="0.982" stop-color="#ffc607"/><stop offset="1" stop-color="#ffc100"/></linearGradient><linearGradient id="g98" gradientUnits="userSpaceOnUse" x1="3.5" x2="146.5"><stop offset="0" stop-color="#00ffd1"/><stop offset="0.42" stop-color="#00ffae"/><stop offset="0.448" stop-color="#00ffab"/><stop offset="0.476" stop-color="#3affa8"/><stop offset="0.503" stop-color="#59ffa4"/><stop offset="0.587" stop-color="#95ff99"/><stop offset="0.783" stop-color="#f7ff73"/><stop offset="0.811" stop-color="#fffa69"/><stop offset="0.951" stop-color="#ffcb27"/><stop offset="1" stop-color="#ffbe00"/></linearGradient><linearGradient id="g99" gradientUnits="userSpaceOnUse" x1="3.5" x2="147.5"><stop offset="0" stop-color="#00ffd3"/><stop offset="0.444" stop-color="#00ffad"/><stop offset="0.472" stop-color="#3cffaa"/><stop offset="0.5" stop-color="#5affa6"/><stop offset="0.583" stop-color="#96ff9b"/><stop offset="0.75" stop-color="#ecff7c"/><stop offset="0.778" stop-color="#f9ff75"/><stop offset="0.833" stop-color="#ffed5f"/><stop offset="0.944" stop-color="#ffca2b"/><stop offset="1" stop-color="#fb0"/></linearGradient><linearGradient id="g100" gradientUnits="userSpaceOnUse" x1="3.5" x2="148.5"><stop offset="0" stop-color="#00ffd4"/><stop offset="0.414" stop-color="#00ffb2"/><stop offset="0.441" stop-color="#00ffaf"/><stop offset="0.469" stop-color="#3effab"/><stop offset="0.524" stop-color="#72ffa4"/><stop offset="0.634" stop-color="#b7ff94"/><stop offset="0.772" stop-color="#faff78"/><stop offset="0.828" stop-color="#ffec61"/><stop offset="0.938" stop-color="#ffc82e"/><stop offset="0.966" stop-color="#ffc11d"/><stop offset="0.993" stop-color="#ffba00"/><stop offset="1" stop-color="#ffb900"/></linearGradient><linearGradient id="g101" gradientUnits="userSpaceOnUse" x1="3.5" x2="149.5"><stop offset="0" stop-color="#00ffd6"/><stop offset="0.438" stop-color="#00ffb1"/><stop offset="0.466" stop-color="#3fffad"/><stop offset="0.493" stop-color="#5dffaa"/><stop offset="0.575" stop-color="#99ff9f"/><stop offset="0.74" stop-color="#efff81"/><stop offset="0.767" stop-color="#fcff7a"/><stop offset="0.932" stop-color="#ffc732"/><stop offset="0.959" stop-color="#ffc022"/><stop offset="0.986" stop-color="#ffb900"/><stop offset="1" stop-color="#ffb600"/></linearGradient><linearGradient id="g102" gradientUnits="userSpaceOnUse" x1="3.5" x2="150.5"><stop offset="0" stop-color="#00ffd7"/><stop offset="0.408" stop-color="#00ffb5"/><stop offset="0.435" stop-color="#00ffb2"/><stop offset="0.463" stop-color="#41ffaf"/><stop offset="0.517" stop-color="#75ffa8"/><stop offset="0.626" stop-color="#b9ff98"/><stop offset="0.762" stop-color="#feff7d"/><stop offset="0.898" stop-color="#ffcd42"/><stop offset="0.952" stop-color="#ffbf26"/><stop offset="1" stop-color="#ffb300"/></linearGradient><linearGradient id="g103" gradientUnits="userSpaceOnUse" x1="4.0" x2="151.5"><stop offset="0" stop-color="#00ffd8"/><stop offset="0.407" stop-color="#00ffb7"/><stop offset="0.434" stop-color="#15ffb4"/><stop offset="0.461" stop-color="#47ffb1"/><stop offset="0.515" stop-color="#79ffaa"/><stop offset="0.624" stop-color="#bdff9a"/><stop offset="0.759" stop-color="#fffd7e"/><stop offset="0.895" stop-color="#ffcb43"/><stop offset="0.949" stop-color="#ffbc28"/><stop offset="1" stop-color="#ffb000"/></linearGradient><linearGradient id="g104" gradientUnits="userSpaceOnUse" x1="4.0" x2="152.5"><stop offset="0" stop-color="#00ffda"/><stop offset="0.404" stop-color="#00ffb9"/><stop offset="0.431" stop-color="#19ffb6"/><stop offset="0.458" stop-color="#48ffb3"/><stop offset="0.512" stop-color="#7affac"/><stop offset="0.62" stop-color="#beff9c"/><stop offset="0.727" stop-color="#f6ff87"/><stop offset="0.754" stop-color="#fffb80"/><stop offset="0.889" stop-color="#ffca45"/><stop offset="0.97" stop-color="#ffb51a"/><stop offset="1" stop-color="#ffae00"/></linearGradient><linearGradient id="g105" gradientUnits="userSpaceOnUse" x1="4.0" x2="153.5"><stop offset="0" stop-color="#00ffdb"/><stop offset="0.401" stop-color="#0fb"/><stop offset="0.428" stop-color="#1cffb8"/><stop offset="0.455" stop-color="#4affb4"/><stop offset="0.508" stop-color="#7bffae"/><stop offset="0.615" stop-color="#bfff9e"/><stop offset="0.722" stop-color="#f7ff8a"/><stop offset="0.749" stop-color="#fffa81"/><stop offset="0.883" stop-color="#ffc848"/><stop offset="0.963" stop-color="#ffb31f"/><stop offset="0.99" stop-color="#ffad00"/><stop offset="1" stop-color="#ffab00"/></linearGradient><linearGradient id="g106" gradientUnits="userSpaceOnUse" x1="4.0" x2="154.5"><stop offset="0" stop-color="#0fd"/><stop offset="0.399" stop-color="#00ffbc"/><stop offset="0.425" stop-color="#1fffb9"/><stop offset="0.452" stop-color="#4bffb6"/><stop offset="0.505" stop-color="#7cffb0"/><stop offset="0.611" stop-color="#c1ffa0"/><stop offset="0.718" stop-color="#f9ff8c"/><stop offset="0.771" stop-color="#ffec77"/><stop offset="0.904" stop-color="#ffc03e"/><stop offset="0.957" stop-color="#ffb223"/><stop offset="0.983" stop-color="#ffac09"/><stop offset="1" stop-color="#ffa800"/></linearGradient><linearGradient id="g107" gradientUnits="userSpaceOnUse" x1="4.5" x2="155.5"><stop offset="0" stop-color="#00ffde"/><stop offset="0.397" stop-color="#00ffbe"/><stop offset="0.45" stop-color="#51ffb8"/><stop offset="0.503" stop-color="#80ffb1"/><stop offset="0.609" stop-color="#c4ffa2"/><stop offset="0.715" stop-color="#fcff8e"/><stop offset="0.848" stop-color="#ffcd56"/><stop offset="0.954" stop-color="#ffb025"/><stop offset="1" stop-color="#ffa600"/></linearGradient><linearGradient id="g108" gradientUnits="userSpaceOnUse" x1="4.5" x2="156.5"><stop offset="0" stop-color="#00ffe0"/><stop offset="0.395" stop-color="#00ffc0"/><stop offset="0.447" stop-color="#52ffba"/><stop offset="0.5" stop-color="#82ffb3"/><stop offset="0.605" stop-color="#c5ffa4"/><stop offset="0.711" stop-color="#feff91"/><stop offset="0.842" stop-color="#ffcb58"/><stop offset="0.947" stop-color="#ffaf29"/><stop offset="1" stop-color="#ffa300"/></linearGradient><linearGradient id="g109" gradientUnits="userSpaceOnUse" x1="4.5" x2="157.5"><stop offset="0" stop-color="#00ffe1"/><stop offset="0.392" stop-color="#00ffc2"/><stop offset="0.418" stop-color="#2effbf"/><stop offset="0.444" stop-color="#53ffbc"/><stop offset="0.497" stop-color="#83ffb5"/><stop offset="0.627" stop-color="#d6ffa2"/><stop offset="0.706" stop-color="#fffe93"/><stop offset="0.81" stop-color="#ffd364"/><stop offset="0.941" stop-color="#ffae2c"/><stop offset="0.967" stop-color="#ffa81c"/><stop offset="0.993" stop-color="#ffa200"/><stop offset="1" stop-color="#ffa100"/></linearGradient><linearGradient id="g110" gradientUnits="userSpaceOnUse" x1="5.0" x2="158.5"><stop offset="0" stop-color="#00ffe2"/><stop offset="0.391" stop-color="#00ffc3"/><stop offset="0.417" stop-color="#36ffc0"/><stop offset="0.443" stop-color="#58ffbd"/><stop offset="0.495" stop-color="#87ffb7"/><stop offset="0.599" stop-color="#caffa8"/><stop offset="0.678" stop-color="#f5ff9a"/><stop offset="0.704" stop-color="#fffb93"/><stop offset="0.808" stop-color="#ffd065"/><stop offset="0.938" stop-color="#ffac2d"/><stop offset="0.964" stop-color="#ffa61e"/><stop offset="0.99" stop-color="#ffa000"/><stop offset="1" stop-color="#ff9e00"/></linearGradient><linearGradient id="g111" gradientUnits="userSpaceOnUse" x1="5.0" x2="159.5"><stop offset="0" stop-color="#00ffe4"/><stop offset="0.388" stop-color="#00ffc5"/><stop offset="0.414" stop-color="#38ffc2"/><stop offset="0.44" stop-color="#5affbf"/><stop offset="0.492" stop-color="#88ffb9"/><stop offset="0.621" stop-color="#dbffa6"/><stop offset="0.673" stop-color="#f7ff9d"/><stop offset="0.699" stop-color="#fff994"/><stop offset="0.828" stop-color="#ffc65c"/><stop offset="0.958" stop-color="#ffa422"/><stop offset="0.984" stop-color="#ff9f0a"/><stop offset="1" stop-color="#ff9b00"/></linearGradient><linearGradient id="g112" gradientUnits="userSpaceOnUse" x1="5.0" x2="160.5"><stop offset="0" stop-color="#00ffe6"/><stop offset="0.386" stop-color="#00ffc7"/><stop offset="0.412" stop-color="#3affc4"/><stop offset="0.437" stop-color="#5bffc2"/><stop offset="0.489" stop-color="#89ffbb"/><stop offset="0.592" stop-color="#cdffad"/><stop offset="0.669" stop-color="#f9ff9f"/><stop offset="0.72" stop-color="#ffeb89"/><stop offset="0.849" stop-color="#ffbd54"/><stop offset="0.952" stop-color="#ffa326"/><stop offset="1" stop-color="#f90"/></linearGradient><linearGradient id="g113" gradientUnits="userSpaceOnUse" x1="5.0" x2="161.5"><stop offset="0" stop-color="#00ffe7"/><stop offset="0.383" stop-color="#00ffc9"/><stop offset="0.409" stop-color="#3cffc6"/><stop offset="0.435" stop-color="#5dffc4"/><stop offset="0.486" stop-color="#8bffbd"/><stop offset="0.613" stop-color="#deffab"/><stop offset="0.665" stop-color="#fbffa2"/><stop offset="0.767" stop-color="#ffd574"/><stop offset="0.92" stop-color="#ffa836"/><stop offset="0.971" stop-color="#ff9c19"/><stop offset="1" stop-color="#ff9700"/></linearGradient><linearGradient id="g114" gradientUnits="userSpaceOnUse" x1="5.5" x2="162.5"><stop offset="0" stop-color="#00ffe9"/><stop offset="0.382" stop-color="#00ffcb"/><stop offset="0.408" stop-color="#42ffc8"/><stop offset="0.433" stop-color="#62ffc5"/><stop offset="0.51" stop-color="#a1ffbc"/><stop offset="0.662" stop-color="#feffa4"/><stop offset="0.79" stop-color="#ffc96a"/><stop offset="0.943" stop-color="#ffa02b"/><stop offset="0.968" stop-color="#ff9b1b"/><stop offset="0.994" stop-color="#ff9500"/><stop offset="1" stop-color="#ff9400"/></linearGradient><linearGradient id="g115" gradientUnits="userSpaceOnUse" x1="5.5" x2="163.5"><stop offset="0" stop-color="#00ffea"/><stop offset="0.38" stop-color="#00ffcd"/><stop offset="0.405" stop-color="#44ffca"/><stop offset="0.43" stop-color="#63ffc7"/><stop offset="0.506" stop-color="#a3ffbe"/><stop offset="0.658" stop-color="#fffea6"/><stop offset="0.759" stop-color="#ffd176"/><stop offset="0.911" stop-color="#ffa539"/><stop offset="0.962" stop-color="#ff9920"/><stop offset="0.987" stop-color="#ff9400"/><stop offset="1" stop-color="#ff9200"/></linearGradient><linearGradient id="g116" gradientUnits="userSpaceOnUse" x1="5.5" x2="164.5"><stop offset="0" stop-color="#00ffec"/><stop offset="0.377" stop-color="#00ffcf"/><stop offset="0.403" stop-color="#46ffcc"/><stop offset="0.453" stop-color="#7cffc6"/><stop offset="0.553" stop-color="#c6ffb9"/><stop offset="0.654" stop-color="#fffca7"/><stop offset="0.755" stop-color="#ffcf77"/><stop offset="0.931" stop-color="#ff9e31"/><stop offset="0.981" stop-color="#ff9310"/><stop offset="1" stop-color="#ff8f00"/></linearGradient><linearGradient id="g117" gradientUnits="userSpaceOnUse" x1="6.0" x2="165.5"><stop offset="0" stop-color="#00ffed"/><stop offset="0.351" stop-color="#00ffd3"/><stop offset="0.376" stop-color="#19ffd0"/><stop offset="0.401" stop-color="#4cffce"/><stop offset="0.451" stop-color="#81ffc8"/><stop offset="0.552" stop-color="#c9ffbb"/><stop offset="0.627" stop-color="#f7ffaf"/><stop offset="0.652" stop-color="#fff9a6"/><stop offset="0.752" stop-color="#ffcd78"/><stop offset="0.928" stop-color="#ff9c32"/><stop offset="0.978" stop-color="#ff9113"/><stop offset="1" stop-color="#ff8d00"/></linearGradient><linearGradient id="g118" gradientUnits="userSpaceOnUse" x1="6.0" x2="166.5"><stop offset="0" stop-color="#00ffef"/><stop offset="0.349" stop-color="#00ffd5"/><stop offset="0.374" stop-color="#1dffd3"/><stop offset="0.399" stop-color="#4dffd0"/><stop offset="0.424" stop-color="#6bffcd"/><stop offset="0.498" stop-color="#a9ffc4"/><stop offset="0.623" stop-color="#f9ffb2"/><stop offset="0.673" stop-color="#ffea9b"/><stop offset="0.773" stop-color="#ffc26f"/><stop offset="0.947" stop-color="#ff9528"/><stop offset="0.972" stop-color="#ff9019"/><stop offset="1" stop-color="#ff8a00"/></linearGradient><linearGradient id="g119" gradientUnits="userSpaceOnUse" x1="6.0" x2="167.5"><stop offset="0" stop-color="#00fff1"/><stop offset="0.347" stop-color="#00ffd7"/><stop offset="0.372" stop-color="#20ffd5"/><stop offset="0.396" stop-color="#4fffd2"/><stop offset="0.446" stop-color="#83ffcd"/><stop offset="0.52" stop-color="#bcffc3"/><stop offset="0.619" stop-color="#fbffb4"/><stop offset="0.718" stop-color="#ffd385"/><stop offset="0.867" stop-color="#ffa54b"/><stop offset="0.966" stop-color="#ff8f1d"/><stop offset="0.991" stop-color="#ff8a00"/><stop offset="1" stop-color="#f80"/></linearGradient><linearGradient id="g120" gradientUnits="userSpaceOnUse" x1="6.0" x2="168.5"><stop offset="0" stop-color="#00fff2"/><stop offset="0.345" stop-color="#00ffd9"/><stop offset="0.369" stop-color="#23ffd7"/><stop offset="0.394" stop-color="#51ffd4"/><stop offset="0.443" stop-color="#85ffcf"/><stop offset="0.542" stop-color="#ceffc2"/><stop offset="0.615" stop-color="#fdffb7"/><stop offset="0.738" stop-color="#ffc87c"/><stop offset="0.886" stop-color="#ff9d43"/><stop offset="0.96" stop-color="#ff8d21"/><stop offset="1" stop-color="#ff8600"/></linearGradient><linearGradient id="g121" gradientUnits="userSpaceOnUse" x1="6.5" x2="169.5"><stop offset="0" stop-color="#00fff4"/><stop offset="0.344" stop-color="#00ffdb"/><stop offset="0.393" stop-color="#56ffd6"/><stop offset="0.442" stop-color="#89ffd1"/><stop offset="0.54" stop-color="#d2ffc4"/><stop offset="0.613" stop-color="#fffeb8"/><stop offset="0.712" stop-color="#ffce86"/><stop offset="0.859" stop-color="#ffa14d"/><stop offset="0.957" stop-color="#ff8c23"/><stop offset="1" stop-color="#ff8300"/></linearGradient><linearGradient id="g122" gradientUnits="userSpaceOnUse" x1="6.5" x2="170.5"><stop offset="0" stop-color="#00fff5"/><stop offset="0.341" stop-color="#0fd"/><stop offset="0.366" stop-color="#30ffdb"/><stop offset="0.39" stop-color="#58ffd8"/><stop offset="0.439" stop-color="#8affd3"/><stop offset="0.537" stop-color="#d3ffc7"/><stop offset="0.61" stop-color="#fffcb9"/><stop offset="0.707" stop-color="#ffcd88"/><stop offset="0.854" stop-color="#ffa04f"/><stop offset="0.951" stop-color="#ff8a26"/><stop offset="1" stop-color="#ff8100"/></linearGradient><linearGradient id="g123" gradientUnits="userSpaceOnUse" x1="6.5" x2="171.5"><stop offset="0" stop-color="#00fff7"/><stop offset="0.339" stop-color="#00ffdf"/><stop offset="0.364" stop-color="#32ffdd"/><stop offset="0.388" stop-color="#5affda"/><stop offset="0.436" stop-color="#8cffd5"/><stop offset="0.533" stop-color="#d5ffc9"/><stop offset="0.582" stop-color="#f5ffc2"/><stop offset="0.606" stop-color="#fffaba"/><stop offset="0.703" stop-color="#ffcb89"/><stop offset="0.848" stop-color="#ff9f51"/><stop offset="0.945" stop-color="#ff8929"/><stop offset="0.97" stop-color="#ff841b"/><stop offset="0.994" stop-color="#ff8000"/><stop offset="1" stop-color="#ff7f00"/></linearGradient><linearGradient id="g124" gradientUnits="userSpaceOnUse" x1="7.0" x2="172.5"><stop offset="0" stop-color="#00fff9"/><stop offset="0.338" stop-color="#00ffe1"/><stop offset="0.363" stop-color="#3bffdf"/><stop offset="0.387" stop-color="#5fffdc"/><stop offset="0.435" stop-color="#90ffd7"/><stop offset="0.532" stop-color="#d9ffcb"/><stop offset="0.58" stop-color="#f9ffc4"/><stop offset="0.628" stop-color="#ffe9ac"/><stop offset="0.725" stop-color="#ffc07f"/><stop offset="0.894" stop-color="#ff913f"/><stop offset="0.967" stop-color="#ff831d"/><stop offset="0.991" stop-color="#ff7e00"/><stop offset="1" stop-color="#ff7c00"/></linearGradient><linearGradient id="g125" gradientUnits="userSpaceOnUse" x1="7.0" x2="173.5"><stop offset="0" stop-color="#00fffa"/><stop offset="0.336" stop-color="#00ffe3"/><stop offset="0.36" stop-color="#3dffe1"/><stop offset="0.384" stop-color="#61ffdf"/><stop offset="0.456" stop-color="#a6ffd7"/><stop offset="0.577" stop-color="#fbffc7"/><stop offset="0.673" stop-color="#ffd195"/><stop offset="0.817" stop-color="#ffa15c"/><stop offset="0.937" stop-color="#ff862d"/><stop offset="0.961" stop-color="#ff8120"/><stop offset="1" stop-color="#ff7a00"/></linearGradient><linearGradient id="g126" gradientUnits="userSpaceOnUse" x1="7.0" x2="174.5"><stop offset="0" stop-color="#00fffc"/><stop offset="0.334" stop-color="#00ffe5"/><stop offset="0.358" stop-color="#3fffe3"/><stop offset="0.382" stop-color="#62ffe1"/><stop offset="0.43" stop-color="#93ffdc"/><stop offset="0.549" stop-color="#edffcd"/><stop offset="0.573" stop-color="#fdffc9"/><stop offset="0.693" stop-color="#ffc58b"/><stop offset="0.86" stop-color="#ff944c"/><stop offset="0.955" stop-color="#ff8024"/><stop offset="1" stop-color="#ff7800"/></linearGradient><linearGradient id="g127" gradientUnits="userSpaceOnUse" x1="7.5" x2="175.5"><stop offset="0" stop-color="#00fffe"/><stop offset="0.333" stop-color="#00ffe7"/><stop offset="0.357" stop-color="#46ffe5"/><stop offset="0.381" stop-color="#67ffe3"/><stop offset="0.429" stop-color="#97ffde"/><stop offset="0.548" stop-color="#f1ffcf"/><stop offset="0.571" stop-color="#fffdca"/><stop offset="0.667" stop-color="#ffcc96"/><stop offset="0.81" stop-color="#ff9e5e"/><stop offset="0.952" stop-color="#ff7e25"/><stop offset="0.976" stop-color="#ff7a16"/><stop offset="1" stop-color="#ff7500"/></linearGradient><linearGradient id="g128" gradientUnits="userSpaceOnUse" x1="7.5" x2="176.5"><stop offset="0" stop-color="#00feff"/><stop offset="0.331" stop-color="#00ffe9"/><stop offset="0.355" stop-color="#48ffe7"/><stop offset="0.379" stop-color="#69ffe5"/><stop offset="0.426" stop-color="#99ffe0"/><stop offset="0.544" stop-color="#f3ffd2"/><stop offset="0.568" stop-color="#fffbcb"/><stop offset="0.663" stop-color="#ffcb97"/><stop offset="0.805" stop-color="#ff9c5f"/><stop offset="0.947" stop-color="#ff7d28"/><stop offset="0.97" stop-color="#ff781a"/><stop offset="0.994" stop-color="#ff7400"/><stop offset="1" stop-color="#ff7300"/></linearGradient><linearGradient id="g129" gradientUnits="userSpaceOnUse" x1="7.5" x2="177.5"><stop offset="0" stop-color="#00fdff"/><stop offset="0.306" stop-color="#0fe"/><stop offset="0.329" stop-color="#00ffec"/><stop offset="0.353" stop-color="#4affea"/><stop offset="0.4" stop-color="#84ffe5"/><stop offset="0.471" stop-color="#c1ffdd"/><stop offset="0.541" stop-color="#f5ffd5"/><stop offset="0.565" stop-color="#fff9cc"/><stop offset="0.659" stop-color="#ffc998"/><stop offset="0.8" stop-color="#ff9b61"/><stop offset="0.941" stop-color="#ff7c2b"/><stop offset="0.965" stop-color="#ff771e"/><stop offset="1" stop-color="#ff7100"/></linearGradient><linearGradient id="g130" gradientUnits="userSpaceOnUse" x1="8.0" x2="178.5"><stop offset="0" stop-color="#00fbff"/><stop offset="0.235" stop-color="#00fff5"/><stop offset="0.305" stop-color="#00fff0"/><stop offset="0.328" stop-color="#1affee"/><stop offset="0.352" stop-color="#50ffec"/><stop offset="0.375" stop-color="#70ffe9"/><stop offset="0.446" stop-color="#b3ffe2"/><stop offset="0.54" stop-color="#f9ffd7"/><stop offset="0.587" stop-color="#ffe7bd"/><stop offset="0.68" stop-color="#ffbd8e"/><stop offset="0.845" stop-color="#ff8d50"/><stop offset="0.962" stop-color="#ff7520"/><stop offset="1" stop-color="#ff6f00"/></linearGradient><linearGradient id="g131" gradientUnits="userSpaceOnUse" x1="8.0" x2="179.5"><stop offset="0" stop-color="#00f9ff"/><stop offset="0.163" stop-color="#00fffc"/><stop offset="0.303" stop-color="#00fff2"/><stop offset="0.327" stop-color="#1efff0"/><stop offset="0.35" stop-color="#52ffee"/><stop offset="0.397" stop-color="#8affea"/><stop offset="0.49" stop-color="#d9ffe0"/><stop offset="0.536" stop-color="#fbffda"/><stop offset="0.63" stop-color="#ffcea5"/><stop offset="0.77" stop-color="#ff9e6b"/><stop offset="0.956" stop-color="#ff7423"/><stop offset="1" stop-color="#ff6c00"/></linearGradient><linearGradient id="g132" gradientUnits="userSpaceOnUse" x1="8.0" x2="180.5"><stop offset="0" stop-color="#00f7ff"/><stop offset="0.209" stop-color="#00fffb"/><stop offset="0.301" stop-color="#00fff4"/><stop offset="0.325" stop-color="#21fff2"/><stop offset="0.348" stop-color="#54fff0"/><stop offset="0.394" stop-color="#8cffec"/><stop offset="0.487" stop-color="#dbffe2"/><stop offset="0.533" stop-color="#fdffdc"/><stop offset="0.626" stop-color="#ffcda6"/><stop offset="0.765" stop-color="#ff9c6c"/><stop offset="0.951" stop-color="#ff7326"/><stop offset="0.974" stop-color="#ff6f18"/><stop offset="1" stop-color="#ff6a00"/></linearGradient><linearGradient id="g133" gradientUnits="userSpaceOnUse" x1="8.5" x2="181.5"><stop offset="0" stop-color="#00f6ff"/><stop offset="0.231" stop-color="#00fffb"/><stop offset="0.301" stop-color="#00fff6"/><stop offset="0.347" stop-color="#5afff3"/><stop offset="0.393" stop-color="#90ffee"/><stop offset="0.486" stop-color="#dfffe5"/><stop offset="0.532" stop-color="#fffddd"/><stop offset="0.601" stop-color="#ffd4b1"/><stop offset="0.717" stop-color="#ffa87d"/><stop offset="0.902" stop-color="#ff7a3b"/><stop offset="0.971" stop-color="#ff6d1a"/><stop offset="0.994" stop-color="#ff6900"/><stop offset="1" stop-color="#ff6800"/></linearGradient><linearGradient id="g134" gradientUnits="userSpaceOnUse" x1="8.5" x2="182.5"><stop offset="0" stop-color="#00f4ff"/><stop offset="0.253" stop-color="#00fffc"/><stop offset="0.299" stop-color="#00fff9"/><stop offset="0.345" stop-color="#5cfff5"/><stop offset="0.391" stop-color="#92fff1"/><stop offset="0.483" stop-color="#e1ffe7"/><stop offset="0.529" stop-color="#fffbde"/><stop offset="0.598" stop-color="#ffd2b2"/><stop offset="0.736" stop-color="#ff9f76"/><stop offset="0.92" stop-color="#ff7434"/><stop offset="0.966" stop-color="#ff6b1e"/><stop offset="1" stop-color="#ff6500"/></linearGradient><linearGradient id="g135" gradientUnits="userSpaceOnUse" x1="8.5" x2="183.5"><stop offset="0" stop-color="#00f2ff"/><stop offset="0.274" stop-color="#00fffd"/><stop offset="0.297" stop-color="#00fffb"/><stop offset="0.32" stop-color="#33fff9"/><stop offset="0.343" stop-color="#5dfff7"/><stop offset="0.389" stop-color="#94fff3"/><stop offset="0.48" stop-color="#e3ffea"/><stop offset="0.503" stop-color="#f4ffe8"/><stop offset="0.526" stop-color="#fff9df"/><stop offset="0.594" stop-color="#ffd1b3"/><stop offset="0.709" stop-color="#ffa580"/><stop offset="0.891" stop-color="#ff773f"/><stop offset="0.96" stop-color="#ff6a21"/><stop offset="1" stop-color="#ff6300"/></linearGradient><linearGradient id="g136" gradientUnits="userSpaceOnUse" x1="9.0" x2="184.5"><stop offset="0" stop-color="#00f1ff"/><stop offset="0.296" stop-color="#00fffd"/><stop offset="0.319" stop-color="#3cfffc"/><stop offset="0.342" stop-color="#63fffa"/><stop offset="0.387" stop-color="#98fff6"/><stop offset="0.479" stop-color="#e7ffed"/><stop offset="0.501" stop-color="#f9ffea"/><stop offset="0.547" stop-color="#ffe6ce"/><stop offset="0.638" stop-color="#ffba9c"/><stop offset="0.798" stop-color="#ff895f"/><stop offset="0.934" stop-color="#ff6c2d"/><stop offset="0.98" stop-color="#ff6413"/><stop offset="1" stop-color="#ff6100"/></linearGradient><linearGradient id="g137" gradientUnits="userSpaceOnUse" x1="9.0" x2="185.5"><stop offset="0" stop-color="#00efff"/><stop offset="0.295" stop-color="#00feff"/><stop offset="0.317" stop-color="#3efffe"/><stop offset="0.34" stop-color="#65fffc"/><stop offset="0.385" stop-color="#9afff8"/><stop offset="0.476" stop-color="#e9fff0"/><stop offset="0.499" stop-color="#fbffed"/><stop offset="0.589" stop-color="#ffccb4"/><stop offset="0.703" stop-color="#ffa181"/><stop offset="0.907" stop-color="#ff6f39"/><stop offset="0.975" stop-color="#ff6318"/><stop offset="1" stop-color="#ff5e00"/></linearGradient><linearGradient id="g138" gradientUnits="userSpaceOnUse" x1="9.5" x2="186.5"><stop offset="0" stop-color="#00edff"/><stop offset="0.294" stop-color="#00fcff"/><stop offset="0.316" stop-color="#46feff"/><stop offset="0.339" stop-color="#6bffff"/><stop offset="0.407" stop-color="#b4fff9"/><stop offset="0.497" stop-color="#ffffef"/><stop offset="0.565" stop-color="#ffd4c0"/><stop offset="0.678" stop-color="#ffa58a"/><stop offset="0.859" stop-color="#ff774a"/><stop offset="0.949" stop-color="#ff6527"/><stop offset="0.972" stop-color="#ff611a"/><stop offset="0.994" stop-color="#ff5d00"/><stop offset="1" stop-color="#ff5c00"/></linearGradient><linearGradient id="g139" gradientUnits="userSpaceOnUse" x1="9.5" x2="187.5"><stop offset="0" stop-color="#00ecff"/><stop offset="0.292" stop-color="#00faff"/><stop offset="0.315" stop-color="#47fbff"/><stop offset="0.337" stop-color="#6bfdff"/><stop offset="0.382" stop-color="#a0fffe"/><stop offset="0.472" stop-color="#f0fff5"/><stop offset="0.494" stop-color="#fffcf0"/><stop offset="0.562" stop-color="#ffd2c1"/><stop offset="0.674" stop-color="#ffa48b"/><stop offset="0.854" stop-color="#ff754b"/><stop offset="0.944" stop-color="#ff6329"/><stop offset="0.966" stop-color="#ff5f1d"/><stop offset="1" stop-color="#ff5900"/></linearGradient><linearGradient id="g140" gradientUnits="userSpaceOnUse" x1="9.5" x2="188.5"><stop offset="0" stop-color="#00eaff"/><stop offset="0.291" stop-color="#00f7ff"/><stop offset="0.313" stop-color="#49f9ff"/><stop offset="0.335" stop-color="#6cfaff"/><stop offset="0.402" stop-color="#b8fffe"/><stop offset="0.469" stop-color="#f2fff8"/><stop offset="0.492" stop-color="#fffaf1"/><stop offset="0.559" stop-color="#ffd0c2"/><stop offset="0.67" stop-color="#ffa28c"/><stop offset="0.849" stop-color="#ff744d"/><stop offset="0.961" stop-color="#ff5e20"/><stop offset="0.983" stop-color="#ff5a11"/><stop offset="1" stop-color="#ff5700"/></linearGradient><linearGradient id="g141" gradientUnits="userSpaceOnUse" x1="10.0" x2="189.5"><stop offset="0" stop-color="#00e8ff"/><stop offset="0.267" stop-color="#00f4ff"/><stop offset="0.29" stop-color="#0ef5ff"/><stop offset="0.312" stop-color="#4ff6ff"/><stop offset="0.357" stop-color="#8cf9ff"/><stop offset="0.446" stop-color="#e4fffd"/><stop offset="0.468" stop-color="#f6fffb"/><stop offset="0.49" stop-color="#fff6f0"/><stop offset="0.557" stop-color="#ffcdc1"/><stop offset="0.669" stop-color="#ffa08c"/><stop offset="0.847" stop-color="#ff724d"/><stop offset="0.958" stop-color="#ff5c22"/><stop offset="0.981" stop-color="#ff5813"/><stop offset="1" stop-color="#f50"/></linearGradient><linearGradient id="g142" gradientUnits="userSpaceOnUse" x1="10.0" x2="190.5"><stop offset="0" stop-color="#00e6ff"/><stop offset="0.266" stop-color="#00f1ff"/><stop offset="0.288" stop-color="#14f3ff"/><stop offset="0.31" stop-color="#50f4ff"/><stop offset="0.355" stop-color="#8cf7ff"/><stop offset="0.465" stop-color="#f9fffe"/><stop offset="0.51" stop-color="#ffe4df"/><stop offset="0.598" stop-color="#ffb6ab"/><stop offset="0.753" stop-color="#ff856c"/><stop offset="0.931" stop-color="#ff5f2f"/><stop offset="0.975" stop-color="#ff5718"/><stop offset="1" stop-color="#ff5200"/></linearGradient><linearGradient id="g143" gradientUnits="userSpaceOnUse" x1="10.5" x2="191.5"><stop offset="0" stop-color="#00e5ff"/><stop offset="0.265" stop-color="#00efff"/><stop offset="0.287" stop-color="#25f0ff"/><stop offset="0.309" stop-color="#56f2ff"/><stop offset="0.354" stop-color="#8ff4ff"/><stop offset="0.464" stop-color="#fcfdff"/><stop offset="0.552" stop-color="#ffc7c2"/><stop offset="0.663" stop-color="#ff9c8d"/><stop offset="0.84" stop-color="#ff6e4f"/><stop offset="0.95" stop-color="#ff5926"/><stop offset="0.972" stop-color="#ff551a"/><stop offset="0.994" stop-color="#ff5100"/><stop offset="1" stop-color="#ff5000"/></linearGradient><linearGradient id="g144" gradientUnits="userSpaceOnUse" x1="10.5" x2="192.5"><stop offset="0" stop-color="#00e3ff"/><stop offset="0.264" stop-color="#00edff"/><stop offset="0.286" stop-color="#27eeff"/><stop offset="0.308" stop-color="#57efff"/><stop offset="0.352" stop-color="#90f2ff"/><stop offset="0.462" stop-color="#fbfaff"/><stop offset="0.549" stop-color="#ffc6c2"/><stop offset="0.659" stop-color="#ff9a8e"/><stop offset="0.857" stop-color="#ff6849"/><stop offset="0.945" stop-color="#ff5728"/><stop offset="0.967" stop-color="#ff531d"/><stop offset="1" stop-color="#ff4d00"/></linearGradient><linearGradient id="g145" gradientUnits="userSpaceOnUse" x1="10.5" x2="193.5"><stop offset="0" stop-color="#00e1ff"/><stop offset="0.262" stop-color="#00ebff"/><stop offset="0.306" stop-color="#57edff"/><stop offset="0.35" stop-color="#90efff"/><stop offset="0.459" stop-color="#faf7ff"/><stop offset="0.503" stop-color="#ffdce0"/><stop offset="0.59" stop-color="#ffb0ac"/><stop offset="0.721" stop-color="#ff8577"/><stop offset="0.94" stop-color="#ff562b"/><stop offset="0.984" stop-color="#ff4e11"/><stop offset="1" stop-color="#ff4b00"/></linearGradient><linearGradient id="g146" gradientUnits="userSpaceOnUse" x1="11.0" x2="194.5"><stop offset="0" stop-color="#00e0ff"/><stop offset="0.262" stop-color="#00e8ff"/><stop offset="0.283" stop-color="#34e9ff"/><stop offset="0.305" stop-color="#5debff"/><stop offset="0.349" stop-color="#93edff"/><stop offset="0.458" stop-color="#fcf4ff"/><stop offset="0.545" stop-color="#ffc0c3"/><stop offset="0.676" stop-color="#ff8f87"/><stop offset="0.916" stop-color="#ff5834"/><stop offset="0.981" stop-color="#ff4b13"/><stop offset="1" stop-color="#ff4800"/></linearGradient><linearGradient id="g147" gradientUnits="userSpaceOnUse" x1="11.0" x2="195.5"><stop offset="0" stop-color="#00deff"/><stop offset="0.26" stop-color="#00e6ff"/><stop offset="0.282" stop-color="#35e7ff"/><stop offset="0.304" stop-color="#5de8ff"/><stop offset="0.347" stop-color="#93eaff"/><stop offset="0.455" stop-color="#fbf1ff"/><stop offset="0.542" stop-color="#ffbfc4"/><stop offset="0.65" stop-color="#ff9490"/><stop offset="0.846" stop-color="#ff634d"/><stop offset="0.954" stop-color="#ff4e24"/><stop offset="0.976" stop-color="#ff4a17"/><stop offset="1" stop-color="#ff4500"/></linearGradient><linearGradient id="g148" gradientUnits="userSpaceOnUse" x1="11.5" x2="196.5"><stop offset="0" stop-color="#0df"/><stop offset="0.259" stop-color="#00e4ff"/><stop offset="0.281" stop-color="#3de5ff"/><stop offset="0.303" stop-color="#62e6ff"/><stop offset="0.346" stop-color="#96e8ff"/><stop offset="0.454" stop-color="#fdeeff"/><stop offset="0.541" stop-color="#ffbbc3"/><stop offset="0.649" stop-color="#ff9290"/><stop offset="0.843" stop-color="#ff614d"/><stop offset="0.951" stop-color="#ff4c25"/><stop offset="0.973" stop-color="#ff4819"/><stop offset="0.995" stop-color="#f40"/><stop offset="1" stop-color="#ff4300"/></linearGradient><linearGradient id="g149" gradientUnits="userSpaceOnUse" x1="11.5" x2="197.5"><stop offset="0" stop-color="#00dbff"/><stop offset="0.258" stop-color="#00e2ff"/><stop offset="0.28" stop-color="#3fe3ff"/><stop offset="0.301" stop-color="#63e3ff"/><stop offset="0.366" stop-color="#ace6ff"/><stop offset="0.452" stop-color="#fcebff"/><stop offset="0.538" stop-color="#ffb9c4"/><stop offset="0.645" stop-color="#ff9091"/><stop offset="0.86" stop-color="#ff5b48"/><stop offset="0.968" stop-color="#ff461d"/><stop offset="1" stop-color="#ff4000"/></linearGradient><linearGradient id="g150" gradientUnits="userSpaceOnUse" x1="11.5" x2="198.5"><stop offset="0" stop-color="#00d9ff"/><stop offset="0.257" stop-color="#00e0ff"/><stop offset="0.278" stop-color="#40e0ff"/><stop offset="0.299" stop-color="#63e1ff"/><stop offset="0.342" stop-color="#96e3ff"/><stop offset="0.449" stop-color="#fbe8ff"/><stop offset="0.535" stop-color="#ffb8c5"/><stop offset="0.642" stop-color="#ff8e92"/><stop offset="0.856" stop-color="#ff5949"/><stop offset="0.963" stop-color="#ff4420"/><stop offset="0.984" stop-color="#ff4011"/><stop offset="1" stop-color="#ff3d00"/></linearGradient><linearGradient id="g151" gradientUnits="userSpaceOnUse" x1="12.0" x2="199.5"><stop offset="0" stop-color="#00d8ff"/><stop offset="0.256" stop-color="#0df"/><stop offset="0.277" stop-color="#47deff"/><stop offset="0.299" stop-color="#68dfff"/><stop offset="0.363" stop-color="#afe1ff"/><stop offset="0.448" stop-color="#fde5ff"/><stop offset="0.533" stop-color="#ffb4c4"/><stop offset="0.661" stop-color="#ff858a"/><stop offset="0.917" stop-color="#ff4a33"/><stop offset="0.96" stop-color="#ff4221"/><stop offset="0.981" stop-color="#ff3e13"/><stop offset="1" stop-color="#ff3a00"/></linearGradient><linearGradient id="g152" gradientUnits="userSpaceOnUse" x1="12.0" x2="200.5"><stop offset="0" stop-color="#00d6ff"/><stop offset="0.255" stop-color="#00dbff"/><stop offset="0.276" stop-color="#48dcff"/><stop offset="0.318" stop-color="#82ddff"/><stop offset="0.403" stop-color="#d6e0ff"/><stop offset="0.446" stop-color="#fce2ff"/><stop offset="0.552" stop-color="#ffa9b9"/><stop offset="0.7" stop-color="#ff787b"/><stop offset="0.934" stop-color="#ff442d"/><stop offset="0.976" stop-color="#ff3c17"/><stop offset="1" stop-color="#ff3700"/></linearGradient><linearGradient id="g153" gradientUnits="userSpaceOnUse" x1="12.5" x2="201.5"><stop offset="0" stop-color="#00d4ff"/><stop offset="0.233" stop-color="#00d9ff"/><stop offset="0.254" stop-color="#18d9ff"/><stop offset="0.275" stop-color="#4edaff"/><stop offset="0.317" stop-color="#86dbff"/><stop offset="0.444" stop-color="#fedfff"/><stop offset="0.529" stop-color="#ffafc4"/><stop offset="0.656" stop-color="#ff818b"/><stop offset="0.91" stop-color="#ff4636"/><stop offset="0.974" stop-color="#ff3919"/><stop offset="0.995" stop-color="#ff3500"/><stop offset="1" stop-color="#ff3400"/></linearGradient><linearGradient id="g154" gradientUnits="userSpaceOnUse" x1="12.5" x2="202.5"><stop offset="0" stop-color="#00d3ff"/><stop offset="0.232" stop-color="#00d6ff"/><stop offset="0.253" stop-color="#1cd7ff"/><stop offset="0.274" stop-color="#4fd7ff"/><stop offset="0.316" stop-color="#86d8ff"/><stop offset="0.421" stop-color="#ebdcff"/><stop offset="0.442" stop-color="#fddcff"/><stop offset="0.526" stop-color="#ffadc5"/><stop offset="0.632" stop-color="#ff8694"/><stop offset="0.842" stop-color="#ff524d"/><stop offset="0.947" stop-color="#ff3c27"/><stop offset="0.989" stop-color="#ff330b"/><stop offset="1" stop-color="#ff3000"/></linearGradient><linearGradient id="g155" gradientUnits="userSpaceOnUse" x1="12.5" x2="203.5"><stop offset="0" stop-color="#00d1ff"/><stop offset="0.23" stop-color="#00d4ff"/><stop offset="0.251" stop-color="#1fd5ff"/><stop offset="0.272" stop-color="#50d5ff"/><stop offset="0.314" stop-color="#86d6ff"/><stop offset="0.419" stop-color="#ead9ff"/><stop offset="0.44" stop-color="#fdd9ff"/><stop offset="0.524" stop-color="#ffabc6"/><stop offset="0.628" stop-color="#ff8495"/><stop offset="0.921" stop-color="#ff3e32"/><stop offset="0.984" stop-color="#ff3111"/><stop offset="1" stop-color="#ff2d00"/></linearGradient><linearGradient id="g156" gradientUnits="userSpaceOnUse" x1="13.0" x2="204.5"><stop offset="0" stop-color="#00cfff"/><stop offset="0.23" stop-color="#00d2ff"/><stop offset="0.272" stop-color="#55d3ff"/><stop offset="0.313" stop-color="#89d4ff"/><stop offset="0.418" stop-color="#ecd6ff"/><stop offset="0.439" stop-color="#fed7ff"/><stop offset="0.522" stop-color="#ffa8c5"/><stop offset="0.648" stop-color="#ff7c8c"/><stop offset="0.898" stop-color="#ff403a"/><stop offset="0.961" stop-color="#ff3220"/><stop offset="0.982" stop-color="#ff2e13"/><stop offset="1" stop-color="#ff2900"/></linearGradient><linearGradient id="g157" gradientUnits="userSpaceOnUse" x1="13.0" x2="205.5"><stop offset="0" stop-color="#00ceff"/><stop offset="0.229" stop-color="#00d0ff"/><stop offset="0.27" stop-color="#56d1ff"/><stop offset="0.312" stop-color="#8ad1ff"/><stop offset="0.436" stop-color="#fdd4ff"/><stop offset="0.519" stop-color="#ffa6c6"/><stop offset="0.644" stop-color="#ff7a8d"/><stop offset="0.935" stop-color="#ff352c"/><stop offset="0.977" stop-color="#ff2b17"/><stop offset="1" stop-color="#ff2500"/></linearGradient><linearGradient id="g158" gradientUnits="userSpaceOnUse" x1="13.5" x2="206.5"><stop offset="0" stop-color="#0cf"/><stop offset="0.228" stop-color="#00ceff"/><stop offset="0.249" stop-color="#35ceff"/><stop offset="0.269" stop-color="#5aceff"/><stop offset="0.332" stop-color="#a2cfff"/><stop offset="0.435" stop-color="#ffd1ff"/><stop offset="0.497" stop-color="#ffadd2"/><stop offset="0.58" stop-color="#ff8ba7"/><stop offset="0.725" stop-color="#ff6171"/><stop offset="0.933" stop-color="#ff322d"/><stop offset="0.974" stop-color="#ff2819"/><stop offset="0.995" stop-color="#f20"/><stop offset="1" stop-color="#ff2100"/></linearGradient><linearGradient id="g159" gradientUnits="userSpaceOnUse" x1="13.5" x2="207.5"><stop offset="0" stop-color="#00caff"/><stop offset="0.227" stop-color="#0cf"/><stop offset="0.247" stop-color="#37ccff"/><stop offset="0.268" stop-color="#5bccff"/><stop offset="0.309" stop-color="#8dccff"/><stop offset="0.433" stop-color="#feceff"/><stop offset="0.515" stop-color="#ffa1c6"/><stop offset="0.66" stop-color="#ff7087"/><stop offset="0.928" stop-color="#ff302f"/><stop offset="0.969" stop-color="#ff251c"/><stop offset="1" stop-color="#ff1b00"/></linearGradient><linearGradient id="g160" gradientUnits="userSpaceOnUse" x1="14.0" x2="208.5"><stop offset="0" stop-color="#00c9ff"/><stop offset="0.226" stop-color="#00caff"/><stop offset="0.247" stop-color="#3ecaff"/><stop offset="0.267" stop-color="#5fcaff"/><stop offset="0.329" stop-color="#a4caff"/><stop offset="0.432" stop-color="#ffcafe"/><stop offset="0.514" stop-color="#ff9ec6"/><stop offset="0.638" stop-color="#ff738e"/><stop offset="0.946" stop-color="#ff2727"/><stop offset="0.987" stop-color="#ff1a0f"/><stop offset="1" stop-color="#ff1500"/></linearGradient><linearGradient id="g161" gradientUnits="userSpaceOnUse" x1="14.0" x2="209.5"><stop offset="0" stop-color="#00c7ff"/><stop offset="0.225" stop-color="#00c8ff"/><stop offset="0.246" stop-color="#3fc8ff"/><stop offset="0.266" stop-color="#60c8ff"/><stop offset="0.307" stop-color="#90c8ff"/><stop offset="0.43" stop-color="#ffc8ff"/><stop offset="0.512" stop-color="#ff9cc7"/><stop offset="0.634" stop-color="#ff718f"/><stop offset="0.941" stop-color="#ff2429"/><stop offset="0.982" stop-color="#ff1613"/><stop offset="1" stop-color="#ff0c00"/></linearGradient><linearGradient id="g162" gradientUnits="userSpaceOnUse" x1="14.5" x2="209.5"><stop offset="0" stop-color="#00c5ff"/><stop offset="0.226" stop-color="#00c5ff"/><stop offset="0.246" stop-color="#45c5ff"/><stop offset="0.287" stop-color="#7dc5ff"/><stop offset="0.369" stop-color="#ccc5ff"/><stop offset="0.431" stop-color="#ffc4fd"/><stop offset="0.513" stop-color="#ff99c6"/><stop offset="0.636" stop-color="#ff6f8f"/><stop offset="0.944" stop-color="#ff202a"/><stop offset="0.985" stop-color="#ff0f15"/><stop offset="1" stop-color="#f00"/></linearGradient><linearGradient id="g163" gradientUnits="userSpaceOnUse" x1="14.5" x2="208.5"><stop offset="0" stop-color="#00c4ff"/><stop offset="0.227" stop-color="#00c3ff"/><stop offset="0.247" stop-color="#46c3ff"/><stop offset="0.268" stop-color="#65c3ff"/><stop offset="0.33" stop-color="#a7c3ff"/><stop offset="0.433" stop-color="#ffc2fe"/><stop offset="0.495" stop-color="#ffa0d2"/><stop offset="0.619" stop-color="#ff7398"/><stop offset="0.866" stop-color="#ff3448"/><stop offset="0.969" stop-color="#ff1424"/><stop offset="1" stop-color="#f01"/></linearGradient><linearGradient id="g164" gradientUnits="userSpaceOnUse" x1="15.0" x2="206.5"><stop offset="0" stop-color="#00c2ff"/><stop offset="0.209" stop-color="#00c1ff"/><stop offset="0.23" stop-color="#1bc1ff"/><stop offset="0.251" stop-color="#4cc1ff"/><stop offset="0.292" stop-color="#80c1ff"/><stop offset="0.397" stop-color="#dfc0ff"/><stop offset="0.439" stop-color="#ffbefd"/><stop offset="0.501" stop-color="#ff9dd2"/><stop offset="0.606" stop-color="#ff76a0"/><stop offset="0.794" stop-color="#ff4561"/><stop offset="0.94" stop-color="#ff1f35"/><stop offset="1" stop-color="#ff001c"/></linearGradient><linearGradient id="g165" gradientUnits="userSpaceOnUse" x1="15.0" x2="204.5"><stop offset="0" stop-color="#00c1ff"/><stop offset="0.211" stop-color="#00bfff"/><stop offset="0.232" stop-color="#1ebfff"/><stop offset="0.253" stop-color="#4cbfff"/><stop offset="0.296" stop-color="#81beff"/><stop offset="0.422" stop-color="#f0bdff"/><stop offset="0.443" stop-color="#ffbbfd"/><stop offset="0.528" stop-color="#ff92c7"/><stop offset="0.654" stop-color="#ff6891"/><stop offset="0.95" stop-color="#ff1b36"/><stop offset="0.971" stop-color="#ff122f"/><stop offset="0.992" stop-color="#ff0027"/><stop offset="1" stop-color="#ff0023"/></linearGradient><linearGradient id="g166" gradientUnits="userSpaceOnUse" x1="15.0" x2="202.0"><stop offset="0" stop-color="#00bfff"/><stop offset="0.214" stop-color="#00bdff"/><stop offset="0.235" stop-color="#21bdff"/><stop offset="0.257" stop-color="#4dbdff"/><stop offset="0.299" stop-color="#81bcff"/><stop offset="0.406" stop-color="#debbff"/><stop offset="0.449" stop-color="#ffb9fe"/><stop offset="0.535" stop-color="#ff90c8"/><stop offset="0.663" stop-color="#ff6692"/><stop offset="0.941" stop-color="#ff1f3e"/><stop offset="0.984" stop-color="#ff0a31"/><stop offset="1" stop-color="#ff002b"/></linearGradient><linearGradient id="g167" gradientUnits="userSpaceOnUse" x1="15.5" x2="200.0"><stop offset="0" stop-color="#00bdff"/><stop offset="0.217" stop-color="#0bf"/><stop offset="0.26" stop-color="#52bbff"/><stop offset="0.304" stop-color="#84baff"/><stop offset="0.434" stop-color="#f1b7ff"/><stop offset="0.455" stop-color="#ffb5fc"/><stop offset="0.542" stop-color="#ff8dc7"/><stop offset="0.672" stop-color="#ff6492"/><stop offset="0.954" stop-color="#ff1a3f"/><stop offset="1" stop-color="#ff0030"/></linearGradient><linearGradient id="g168" gradientUnits="userSpaceOnUse" x1="15.5" x2="198.0"><stop offset="0" stop-color="#00bcff"/><stop offset="0.219" stop-color="#00b9ff"/><stop offset="0.241" stop-color="#2db9ff"/><stop offset="0.263" stop-color="#53b8ff"/><stop offset="0.307" stop-color="#84b8ff"/><stop offset="0.438" stop-color="#f0b5ff"/><stop offset="0.46" stop-color="#ffb3fd"/><stop offset="0.548" stop-color="#ff8bc8"/><stop offset="0.679" stop-color="#ff6292"/><stop offset="0.942" stop-color="#ff1d47"/><stop offset="0.964" stop-color="#ff1540"/><stop offset="0.986" stop-color="#ff033a"/><stop offset="1" stop-color="#ff0036"/></linearGradient><linearGradient id="g169" gradientUnits="userSpaceOnUse" x1="16.0" x2="195.5"><stop offset="0" stop-color="#00baff"/><stop offset="0.223" stop-color="#00b7ff"/><stop offset="0.245" stop-color="#35b7ff"/><stop offset="0.267" stop-color="#58b6ff"/><stop offset="0.334" stop-color="#9bb5ff"/><stop offset="0.446" stop-color="#f2b2ff"/><stop offset="0.468" stop-color="#ffaffc"/><stop offset="0.557" stop-color="#ff88c7"/><stop offset="0.691" stop-color="#ff5f92"/><stop offset="0.936" stop-color="#ff204d"/><stop offset="0.981" stop-color="#ff0c41"/><stop offset="1" stop-color="#ff003b"/></linearGradient><linearGradient id="g170" gradientUnits="userSpaceOnUse" x1="16.0" x2="193.5"><stop offset="0" stop-color="#00b8ff"/><stop offset="0.225" stop-color="#00b5ff"/><stop offset="0.248" stop-color="#36b4ff"/><stop offset="0.27" stop-color="#58b4ff"/><stop offset="0.315" stop-color="#87b3ff"/><stop offset="0.451" stop-color="#f1afff"/><stop offset="0.473" stop-color="#ffacfc"/><stop offset="0.563" stop-color="#ff85c8"/><stop offset="0.699" stop-color="#ff5d93"/><stop offset="0.946" stop-color="#ff1c4e"/><stop offset="0.969" stop-color="#ff1248"/><stop offset="0.992" stop-color="#ff0042"/><stop offset="1" stop-color="#ff0040"/></linearGradient><linearGradient id="g171" gradientUnits="userSpaceOnUse" x1="16.5" x2="191.5"><stop offset="0" stop-color="#00b7ff"/><stop offset="0.229" stop-color="#00b3ff"/><stop offset="0.251" stop-color="#3db2ff"/><stop offset="0.297" stop-color="#75b1ff"/><stop offset="0.411" stop-color="#d2aeff"/><stop offset="0.48" stop-color="#ffa9fb"/><stop offset="0.571" stop-color="#ff82c7"/><stop offset="0.709" stop-color="#ff5a93"/><stop offset="0.937" stop-color="#ff1f54"/><stop offset="1" stop-color="#f04"/></linearGradient><linearGradient id="g172" gradientUnits="userSpaceOnUse" x1="17.0" x2="189.0"><stop offset="0" stop-color="#00b5ff"/><stop offset="0.233" stop-color="#00b1ff"/><stop offset="0.256" stop-color="#42b0ff"/><stop offset="0.302" stop-color="#78afff"/><stop offset="0.395" stop-color="#c3acff"/><stop offset="0.465" stop-color="#f4a9ff"/><stop offset="0.488" stop-color="#ffa5fa"/><stop offset="0.581" stop-color="#ff7fc7"/><stop offset="0.721" stop-color="#ff5793"/><stop offset="0.93" stop-color="#ff225b"/><stop offset="1" stop-color="#ff0049"/></linearGradient><linearGradient id="g173" gradientUnits="userSpaceOnUse" x1="17.0" x2="187.0"><stop offset="0" stop-color="#00b3ff"/><stop offset="0.235" stop-color="#00afff"/><stop offset="0.259" stop-color="#44aeff"/><stop offset="0.306" stop-color="#78adff"/><stop offset="0.4" stop-color="#c3a9ff"/><stop offset="0.471" stop-color="#f4a6ff"/><stop offset="0.494" stop-color="#ffa2fa"/><stop offset="0.588" stop-color="#ff7dc8"/><stop offset="0.729" stop-color="#ff5594"/><stop offset="0.941" stop-color="#ff1e5c"/><stop offset="0.965" stop-color="#ff1456"/><stop offset="0.988" stop-color="#ff0050"/><stop offset="1" stop-color="#ff004d"/></linearGradient><linearGradient id="g174" gradientUnits="userSpaceOnUse" x1="17.5" x2="185.0"><stop offset="0" stop-color="#00b2ff"/><stop offset="0.215" stop-color="#00adff"/><stop offset="0.239" stop-color="#1aacff"/><stop offset="0.263" stop-color="#49acff"/><stop offset="0.31" stop-color="#7baaff"/><stop offset="0.43" stop-color="#d5a6ff"/><stop offset="0.478" stop-color="#f5a3ff"/><stop offset="0.501" stop-color="#ff9ef9"/><stop offset="0.621" stop-color="#ff72bd"/><stop offset="0.812" stop-color="#ff407f"/><stop offset="0.955" stop-color="#ff185c"/><stop offset="1" stop-color="#ff0051"/></linearGradient><linearGradient id="g175" gradientUnits="userSpaceOnUse" x1="17.5" x2="183.0"><stop offset="0" stop-color="#00b0ff"/><stop offset="0.218" stop-color="#00abff"/><stop offset="0.242" stop-color="#1daaff"/><stop offset="0.266" stop-color="#4aaaff"/><stop offset="0.314" stop-color="#7ca8ff"/><stop offset="0.459" stop-color="#e5a2ff"/><stop offset="0.508" stop-color="#ff9cfa"/><stop offset="0.604" stop-color="#ff77c8"/><stop offset="0.749" stop-color="#ff4f95"/><stop offset="0.943" stop-color="#ff1c62"/><stop offset="0.991" stop-color="#ff0057"/><stop offset="1" stop-color="#f05"/></linearGradient><linearGradient id="g176" gradientUnits="userSpaceOnUse" x1="18.0" x2="180.5"><stop offset="0" stop-color="#00aeff"/><stop offset="0.222" stop-color="#00a9ff"/><stop offset="0.271" stop-color="#4ea7ff"/><stop offset="0.32" stop-color="#7fa6ff"/><stop offset="0.492" stop-color="#f69eff"/><stop offset="0.517" stop-color="#ff98f8"/><stop offset="0.615" stop-color="#ff74c7"/><stop offset="0.763" stop-color="#ff4c94"/><stop offset="0.935" stop-color="#ff1f68"/><stop offset="0.96" stop-color="#ff1563"/><stop offset="0.985" stop-color="#ff005d"/><stop offset="1" stop-color="#ff005a"/></linearGradient><linearGradient id="g177" gradientUnits="userSpaceOnUse" x1="18.0" x2="178.5"><stop offset="0" stop-color="#00adff"/><stop offset="0.224" stop-color="#00a7ff"/><stop offset="0.274" stop-color="#4fa5ff"/><stop offset="0.324" stop-color="#7fa3ff"/><stop offset="0.474" stop-color="#e69cff"/><stop offset="0.523" stop-color="#ff96f9"/><stop offset="0.623" stop-color="#ff72c8"/><stop offset="0.773" stop-color="#ff4a95"/><stop offset="0.947" stop-color="#ff1a69"/><stop offset="1" stop-color="#ff005d"/></linearGradient><linearGradient id="g178" gradientUnits="userSpaceOnUse" x1="18.5" x2="176.5"><stop offset="0" stop-color="#00abff"/><stop offset="0.228" stop-color="#00a5ff"/><stop offset="0.253" stop-color="#31a4ff"/><stop offset="0.278" stop-color="#54a3ff"/><stop offset="0.329" stop-color="#82a1ff"/><stop offset="0.481" stop-color="#e799ff"/><stop offset="0.506" stop-color="#f798ff"/><stop offset="0.532" stop-color="#ff92f8"/><stop offset="0.633" stop-color="#ff6fc7"/><stop offset="0.81" stop-color="#ff408e"/><stop offset="0.937" stop-color="#ff1e6f"/><stop offset="0.962" stop-color="#ff136a"/><stop offset="0.987" stop-color="#ff0064"/><stop offset="1" stop-color="#ff0061"/></linearGradient><linearGradient id="g179" gradientUnits="userSpaceOnUse" x1="18.5" x2="174.0"><stop offset="0" stop-color="#00a9ff"/><stop offset="0.232" stop-color="#00a3ff"/><stop offset="0.257" stop-color="#33a2ff"/><stop offset="0.283" stop-color="#54a1ff"/><stop offset="0.334" stop-color="#829fff"/><stop offset="0.489" stop-color="#e797ff"/><stop offset="0.514" stop-color="#f695ff"/><stop offset="0.54" stop-color="#ff8ff8"/><stop offset="0.643" stop-color="#ff6cc8"/><stop offset="0.849" stop-color="#ff3788"/><stop offset="0.952" stop-color="#ff1870"/><stop offset="1" stop-color="#f06"/></linearGradient><linearGradient id="g180" gradientUnits="userSpaceOnUse" x1="19.0" x2="172.0"><stop offset="0" stop-color="#00a8ff"/><stop offset="0.235" stop-color="#00a1ff"/><stop offset="0.261" stop-color="#39a0ff"/><stop offset="0.288" stop-color="#599fff"/><stop offset="0.366" stop-color="#979bff"/><stop offset="0.523" stop-color="#f892ff"/><stop offset="0.549" stop-color="#ff8bf7"/><stop offset="0.654" stop-color="#ff69c7"/><stop offset="0.837" stop-color="#ff3a8f"/><stop offset="0.941" stop-color="#ff1c76"/><stop offset="0.993" stop-color="#ff006b"/><stop offset="1" stop-color="#ff0069"/></linearGradient><linearGradient id="g181" gradientUnits="userSpaceOnUse" x1="19.0" x2="170.0"><stop offset="0" stop-color="#00a6ff"/><stop offset="0.238" stop-color="#009fff"/><stop offset="0.265" stop-color="#3b9eff"/><stop offset="0.318" stop-color="#719bff"/><stop offset="0.424" stop-color="#b996ff"/><stop offset="0.53" stop-color="#f78fff"/><stop offset="0.556" stop-color="#ff89f8"/><stop offset="0.662" stop-color="#ff66c8"/><stop offset="0.848" stop-color="#ff3790"/><stop offset="0.954" stop-color="#ff1677"/><stop offset="0.98" stop-color="#ff0071"/><stop offset="1" stop-color="#ff006d"/></linearGradient><linearGradient id="g182" gradientUnits="userSpaceOnUse" x1="19.5" x2="167.5"><stop offset="0" stop-color="#00a4ff"/><stop offset="0.243" stop-color="#009cff"/><stop offset="0.27" stop-color="#409bff"/><stop offset="0.324" stop-color="#7499ff"/><stop offset="0.432" stop-color="#bb93ff"/><stop offset="0.541" stop-color="#f88cff"/><stop offset="0.568" stop-color="#ff85f7"/><stop offset="0.676" stop-color="#ff63c8"/><stop offset="0.865" stop-color="#ff3390"/><stop offset="0.946" stop-color="#ff1a7d"/><stop offset="1" stop-color="#ff0071"/></linearGradient><linearGradient id="g183" gradientUnits="userSpaceOnUse" x1="20.0" x2="165.5"><stop offset="0" stop-color="#00a3ff"/><stop offset="0.22" stop-color="#009bff"/><stop offset="0.247" stop-color="#179aff"/><stop offset="0.275" stop-color="#4599ff"/><stop offset="0.33" stop-color="#7797ff"/><stop offset="0.467" stop-color="#cc8fff"/><stop offset="0.55" stop-color="#fa89ff"/><stop offset="0.605" stop-color="#ff78e8"/><stop offset="0.742" stop-color="#ff51b5"/><stop offset="0.935" stop-color="#ff1e83"/><stop offset="0.99" stop-color="#f07"/><stop offset="1" stop-color="#ff0075"/></linearGradient><linearGradient id="g184" gradientUnits="userSpaceOnUse" x1="20.0" x2="163.5"><stop offset="0" stop-color="#00a1ff"/><stop offset="0.223" stop-color="#09f"/><stop offset="0.251" stop-color="#1a98ff"/><stop offset="0.279" stop-color="#4697ff"/><stop offset="0.334" stop-color="#7794ff"/><stop offset="0.474" stop-color="#cc8cff"/><stop offset="0.557" stop-color="#f986ff"/><stop offset="0.613" stop-color="#ff75e9"/><stop offset="0.78" stop-color="#ff47ad"/><stop offset="0.92" stop-color="#ff228a"/><stop offset="0.948" stop-color="#ff1884"/><stop offset="0.976" stop-color="#ff057e"/><stop offset="1" stop-color="#ff0079"/></linearGradient><linearGradient id="g185" gradientUnits="userSpaceOnUse" x1="20.5" x2="161.0"><stop offset="0" stop-color="#009fff"/><stop offset="0.228" stop-color="#0097ff"/><stop offset="0.285" stop-color="#4b95ff"/><stop offset="0.342" stop-color="#7a92ff"/><stop offset="0.484" stop-color="#ce89ff"/><stop offset="0.569" stop-color="#fb82ff"/><stop offset="0.683" stop-color="#ff61d1"/><stop offset="0.854" stop-color="#ff359e"/><stop offset="0.94" stop-color="#ff1c8a"/><stop offset="1" stop-color="#ff007d"/></linearGradient><linearGradient id="g186" gradientUnits="userSpaceOnUse" x1="20.5" x2="159.0"><stop offset="0" stop-color="#009dff"/><stop offset="0.231" stop-color="#0095ff"/><stop offset="0.289" stop-color="#4c93ff"/><stop offset="0.347" stop-color="#7a90ff"/><stop offset="0.491" stop-color="#cd86ff"/><stop offset="0.578" stop-color="#fa7fff"/><stop offset="0.635" stop-color="#ff6fe8"/><stop offset="0.809" stop-color="#ff40ae"/><stop offset="0.924" stop-color="#ff2191"/><stop offset="0.953" stop-color="#ff158b"/><stop offset="0.982" stop-color="#ff0085"/><stop offset="1" stop-color="#ff0081"/></linearGradient><linearGradient id="g187" gradientUnits="userSpaceOnUse" x1="21.0" x2="157.0"><stop offset="0" stop-color="#009cff"/><stop offset="0.235" stop-color="#0093ff"/><stop offset="0.265" stop-color="#2e92ff"/><stop offset="0.294" stop-color="#5090ff"/><stop offset="0.382" stop-color="#8f8bff"/><stop offset="0.588" stop-color="#fb7cff"/><stop offset="0.706" stop-color="#ff5ad1"/><stop offset="0.882" stop-color="#ff2d9f"/><stop offset="0.941" stop-color="#ff1a91"/><stop offset="0.971" stop-color="#ff098b"/><stop offset="1" stop-color="#ff0085"/></linearGradient><linearGradient id="g188" gradientUnits="userSpaceOnUse" x1="21.5" x2="155.0"><stop offset="0" stop-color="#009aff"/><stop offset="0.24" stop-color="#0091ff"/><stop offset="0.27" stop-color="#358fff"/><stop offset="0.3" stop-color="#548eff"/><stop offset="0.36" stop-color="#808bff"/><stop offset="0.539" stop-color="#df7eff"/><stop offset="0.599" stop-color="#fd78ff"/><stop offset="0.749" stop-color="#ff4fc7"/><stop offset="0.929" stop-color="#ff1e98"/><stop offset="0.989" stop-color="#ff008b"/><stop offset="1" stop-color="#f08"/></linearGradient><linearGradient id="g189" gradientUnits="userSpaceOnUse" x1="21.5" x2="152.5"><stop offset="0" stop-color="#0098ff"/><stop offset="0.244" stop-color="#008fff"/><stop offset="0.275" stop-color="#368dff"/><stop offset="0.305" stop-color="#558cff"/><stop offset="0.397" stop-color="#9286ff"/><stop offset="0.611" stop-color="#fc75ff"/><stop offset="0.794" stop-color="#ff44be"/><stop offset="0.947" stop-color="#ff1798"/><stop offset="0.977" stop-color="#ff0092"/><stop offset="1" stop-color="#ff008d"/></linearGradient><linearGradient id="g190" gradientUnits="userSpaceOnUse" x1="22.0" x2="150.5"><stop offset="0" stop-color="#0096ff"/><stop offset="0.249" stop-color="#008dff"/><stop offset="0.28" stop-color="#3c8bff"/><stop offset="0.311" stop-color="#5989ff"/><stop offset="0.405" stop-color="#9484ff"/><stop offset="0.623" stop-color="#fd72ff"/><stop offset="0.778" stop-color="#ff47c7"/><stop offset="0.934" stop-color="#ff1c9f"/><stop offset="1" stop-color="#ff0091"/></linearGradient><linearGradient id="g191" gradientUnits="userSpaceOnUse" x1="22.5" x2="148.5"><stop offset="0" stop-color="#0095ff"/><stop offset="0.222" stop-color="#008cff"/><stop offset="0.254" stop-color="#0e8aff"/><stop offset="0.286" stop-color="#4189ff"/><stop offset="0.349" stop-color="#7285ff"/><stop offset="0.508" stop-color="#c57aff"/><stop offset="0.635" stop-color="#ff6eff"/><stop offset="0.794" stop-color="#ff43c6"/><stop offset="0.921" stop-color="#ff20a6"/><stop offset="0.984" stop-color="#ff0098"/><stop offset="1" stop-color="#ff0095"/></linearGradient><linearGradient id="g192" gradientUnits="userSpaceOnUse" x1="22.5" x2="146.0"><stop offset="0" stop-color="#0093ff"/><stop offset="0.227" stop-color="#008aff"/><stop offset="0.259" stop-color="#1388ff"/><stop offset="0.291" stop-color="#4286ff"/><stop offset="0.356" stop-color="#7283ff"/><stop offset="0.518" stop-color="#c577ff"/><stop offset="0.648" stop-color="#fe6bff"/><stop offset="0.81" stop-color="#ff40c7"/><stop offset="0.939" stop-color="#ff19a7"/><stop offset="0.972" stop-color="#ff009f"/><stop offset="1" stop-color="#ff009a"/></linearGradient><linearGradient id="g193" gradientUnits="userSpaceOnUse" x1="23.0" x2="144.0"><stop offset="0" stop-color="#0091ff"/><stop offset="0.231" stop-color="#08f"/><stop offset="0.264" stop-color="#1f86ff"/><stop offset="0.298" stop-color="#4784ff"/><stop offset="0.364" stop-color="#7580ff"/><stop offset="0.562" stop-color="#d571ff"/><stop offset="0.661" stop-color="#ff67ff"/><stop offset="0.793" stop-color="#ff43d0"/><stop offset="0.926" stop-color="#ff1eae"/><stop offset="0.992" stop-color="#ff009f"/><stop offset="1" stop-color="#ff009e"/></linearGradient><linearGradient id="g194" gradientUnits="userSpaceOnUse" x1="23.5" x2="142.0"><stop offset="0" stop-color="#008fff"/><stop offset="0.236" stop-color="#0085ff"/><stop offset="0.304" stop-color="#4b82ff"/><stop offset="0.371" stop-color="#787eff"/><stop offset="0.574" stop-color="#d66eff"/><stop offset="0.675" stop-color="#ff62fe"/><stop offset="0.81" stop-color="#ff3fcf"/><stop offset="0.945" stop-color="#ff15ad"/><stop offset="0.979" stop-color="#ff00a6"/><stop offset="1" stop-color="#ff00a2"/></linearGradient><linearGradient id="g195" gradientUnits="userSpaceOnUse" x1="23.5" x2="139.5"><stop offset="0" stop-color="#008dff"/><stop offset="0.241" stop-color="#0083ff"/><stop offset="0.276" stop-color="#2a81ff"/><stop offset="0.31" stop-color="#4c7fff"/><stop offset="0.379" stop-color="#787bff"/><stop offset="0.552" stop-color="#c86eff"/><stop offset="0.69" stop-color="#ff5ffe"/><stop offset="0.862" stop-color="#ff31c7"/><stop offset="0.931" stop-color="#ff1cb6"/><stop offset="0.966" stop-color="#ff07ae"/><stop offset="1" stop-color="#ff00a7"/></linearGradient><linearGradient id="g196" gradientUnits="userSpaceOnUse" x1="24.0" x2="137.5"><stop offset="0" stop-color="#008cff"/><stop offset="0.247" stop-color="#0081ff"/><stop offset="0.282" stop-color="#317fff"/><stop offset="0.317" stop-color="#507dff"/><stop offset="0.423" stop-color="#8c76ff"/><stop offset="0.67" stop-color="#f35fff"/><stop offset="0.705" stop-color="#ff5afd"/><stop offset="0.881" stop-color="#ff2bc6"/><stop offset="0.952" stop-color="#ff11b5"/><stop offset="0.987" stop-color="#ff00ae"/><stop offset="1" stop-color="#ff00ab"/></linearGradient><linearGradient id="g197" gradientUnits="userSpaceOnUse" x1="24.5" x2="135.5"><stop offset="0" stop-color="#008aff"/><stop offset="0.252" stop-color="#007fff"/><stop offset="0.288" stop-color="#377dff"/><stop offset="0.324" stop-color="#547bff"/><stop offset="0.432" stop-color="#8f73ff"/><stop offset="0.685" stop-color="#f55bff"/><stop offset="0.721" stop-color="#ff55fc"/><stop offset="0.865" stop-color="#ff2fcf"/><stop offset="0.937" stop-color="#ff17bd"/><stop offset="0.973" stop-color="#ff00b5"/><stop offset="1" stop-color="#ff00af"/></linearGradient><linearGradient id="g198" gradientUnits="userSpaceOnUse" x1="25.0" x2="133.0"><stop offset="0" stop-color="#08f"/><stop offset="0.259" stop-color="#007cff"/><stop offset="0.296" stop-color="#3c7aff"/><stop offset="0.333" stop-color="#5878ff"/><stop offset="0.444" stop-color="#9171ff"/><stop offset="0.704" stop-color="#f657ff"/><stop offset="0.741" stop-color="#ff50fb"/><stop offset="0.926" stop-color="#ff1cc5"/><stop offset="0.963" stop-color="#ff05bd"/><stop offset="1" stop-color="#ff00b5"/></linearGradient><linearGradient id="g199" gradientUnits="userSpaceOnUse" x1="25.0" x2="131.0"><stop offset="0" stop-color="#0086ff"/><stop offset="0.264" stop-color="#007aff"/><stop offset="0.302" stop-color="#3d78ff"/><stop offset="0.377" stop-color="#6e73ff"/><stop offset="0.566" stop-color="#be65ff"/><stop offset="0.717" stop-color="#f553ff"/><stop offset="0.755" stop-color="#ff4dfb"/><stop offset="0.906" stop-color="#ff23cf"/><stop offset="0.981" stop-color="#ff00bd"/><stop offset="1" stop-color="#ff00b9"/></linearGradient><linearGradient id="g200" gradientUnits="userSpaceOnUse" x1="25.5" x2="129.0"><stop offset="0" stop-color="#0084ff"/><stop offset="0.232" stop-color="#007aff"/><stop offset="0.271" stop-color="#1778ff"/><stop offset="0.309" stop-color="#4275ff"/><stop offset="0.386" stop-color="#7071ff"/><stop offset="0.58" stop-color="#c061ff"/><stop offset="0.734" stop-color="#f74fff"/><stop offset="0.773" stop-color="#ff47fa"/><stop offset="0.928" stop-color="#ff1ace"/><stop offset="0.966" stop-color="#ff00c5"/><stop offset="1" stop-color="#ff00be"/></linearGradient><linearGradient id="g201" gradientUnits="userSpaceOnUse" x1="26.0" x2="127.0"><stop offset="0" stop-color="#0082ff"/><stop offset="0.238" stop-color="#07f"/><stop offset="0.317" stop-color="#4773ff"/><stop offset="0.396" stop-color="#736eff"/><stop offset="0.594" stop-color="#c15eff"/><stop offset="0.752" stop-color="#f84aff"/><stop offset="0.792" stop-color="#ff42f9"/><stop offset="0.911" stop-color="#ff1fd7"/><stop offset="0.95" stop-color="#ff0ace"/><stop offset="1" stop-color="#ff00c3"/></linearGradient><linearGradient id="g202" gradientUnits="userSpaceOnUse" x1="26.5" x2="124.5"><stop offset="0" stop-color="#0080ff"/><stop offset="0.245" stop-color="#0075ff"/><stop offset="0.286" stop-color="#2a73ff"/><stop offset="0.327" stop-color="#4b70ff"/><stop offset="0.449" stop-color="#8768ff"/><stop offset="0.735" stop-color="#ec4bff"/><stop offset="0.776" stop-color="#f945ff"/><stop offset="0.857" stop-color="#ff30ec"/><stop offset="0.939" stop-color="#ff13d7"/><stop offset="0.98" stop-color="#ff00cd"/><stop offset="1" stop-color="#ff00c9"/></linearGradient><linearGradient id="g203" gradientUnits="userSpaceOnUse" x1="26.5" x2="122.5"><stop offset="0" stop-color="#007eff"/><stop offset="0.25" stop-color="#0073ff"/><stop offset="0.292" stop-color="#2b70ff"/><stop offset="0.333" stop-color="#4c6eff"/><stop offset="0.417" stop-color="#7668ff"/><stop offset="0.667" stop-color="#d052ff"/><stop offset="0.792" stop-color="#f840ff"/><stop offset="0.833" stop-color="#ff36f8"/><stop offset="0.917" stop-color="#ff1ce1"/><stop offset="0.958" stop-color="#ff00d7"/><stop offset="1" stop-color="#ff00ce"/></linearGradient><linearGradient id="g204" gradientUnits="userSpaceOnUse" x1="27.0" x2="120.5"><stop offset="0" stop-color="#007cff"/><stop offset="0.257" stop-color="#0070ff"/><stop offset="0.299" stop-color="#326eff"/><stop offset="0.342" stop-color="#506bff"/><stop offset="0.471" stop-color="#8962ff"/><stop offset="0.727" stop-color="#df48ff"/><stop offset="0.813" stop-color="#fa3aff"/><stop offset="0.898" stop-color="#ff22ec"/><stop offset="0.984" stop-color="#ff00d7"/><stop offset="1" stop-color="#ff00d3"/></linearGradient><linearGradient id="g205" gradientUnits="userSpaceOnUse" x1="27.5" x2="118.0"><stop offset="0" stop-color="#007aff"/><stop offset="0.265" stop-color="#006eff"/><stop offset="0.309" stop-color="#376bff"/><stop offset="0.398" stop-color="#6966ff"/><stop offset="0.575" stop-color="#aa58ff"/><stop offset="0.796" stop-color="#ee3cff"/><stop offset="0.84" stop-color="#fb33ff"/><stop offset="0.928" stop-color="#ff16eb"/><stop offset="0.972" stop-color="#ff00e0"/><stop offset="1" stop-color="#ff00da"/></linearGradient><linearGradient id="g206" gradientUnits="userSpaceOnUse" x1="28.0" x2="116.0"><stop offset="0" stop-color="#0078ff"/><stop offset="0.273" stop-color="#006bff"/><stop offset="0.318" stop-color="#3d69ff"/><stop offset="0.409" stop-color="#6b63ff"/><stop offset="0.591" stop-color="#ac54ff"/><stop offset="0.818" stop-color="#ef36ff"/><stop offset="0.864" stop-color="#fc2cff"/><stop offset="0.909" stop-color="#ff1df5"/><stop offset="0.955" stop-color="#ff00ea"/><stop offset="1" stop-color="#ff00df"/></linearGradient><linearGradient id="g207" gradientUnits="userSpaceOnUse" x1="28.0" x2="114.0"><stop offset="0" stop-color="#0076ff"/><stop offset="0.233" stop-color="#006bff"/><stop offset="0.279" stop-color="#0a69ff"/><stop offset="0.326" stop-color="#3e66ff"/><stop offset="0.419" stop-color="#6c60ff"/><stop offset="0.651" stop-color="#ba4cff"/><stop offset="0.837" stop-color="#ee30ff"/><stop offset="0.884" stop-color="#fb25ff"/><stop offset="0.977" stop-color="#ff00ea"/><stop offset="1" stop-color="#ff00e5"/></linearGradient><linearGradient id="g208" gradientUnits="userSpaceOnUse" x1="28.5" x2="111.5"><stop offset="0" stop-color="#0074ff"/><stop offset="0.241" stop-color="#0069ff"/><stop offset="0.289" stop-color="#1a66ff"/><stop offset="0.337" stop-color="#4263ff"/><stop offset="0.434" stop-color="#6f5dff"/><stop offset="0.723" stop-color="#c942ff"/><stop offset="0.867" stop-color="#f028ff"/><stop offset="0.916" stop-color="#fd19ff"/><stop offset="0.964" stop-color="#ff00f5"/><stop offset="1" stop-color="#ff00ec"/></linearGradient><linearGradient id="g209" gradientUnits="userSpaceOnUse" x1="29.0" x2="109.5"><stop offset="0" stop-color="#0072ff"/><stop offset="0.248" stop-color="#06f"/><stop offset="0.348" stop-color="#4661ff"/><stop offset="0.447" stop-color="#715aff"/><stop offset="0.696" stop-color="#bd43ff"/><stop offset="0.845" stop-color="#e42cff"/><stop offset="0.894" stop-color="#f11fff"/><stop offset="0.944" stop-color="#fe00ff"/><stop offset="1" stop-color="#ff00f2"/></linearGradient><linearGradient id="g210" gradientUnits="userSpaceOnUse" x1="29.5" x2="107.5"><stop offset="0" stop-color="#0070ff"/><stop offset="0.256" stop-color="#0064ff"/><stop offset="0.308" stop-color="#2b61ff"/><stop offset="0.359" stop-color="#4a5eff"/><stop offset="0.462" stop-color="#7457ff"/><stop offset="0.718" stop-color="#be3eff"/><stop offset="0.872" stop-color="#e523ff"/><stop offset="0.974" stop-color="#f0f"/><stop offset="1" stop-color="#ff00f9"/></linearGradient><linearGradient id="g211" gradientUnits="userSpaceOnUse" x1="30.0" x2="105.0"><stop offset="0" stop-color="#006eff"/><stop offset="0.267" stop-color="#0061ff"/><stop offset="0.32" stop-color="#315eff"/><stop offset="0.373" stop-color="#4e5bff"/><stop offset="0.533" stop-color="#874fff"/><stop offset="0.8" stop-color="#cd31ff"/><stop offset="0.907" stop-color="#e718ff"/><stop offset="0.96" stop-color="#f300ff"/><stop offset="1" stop-color="#fd00ff"/></linearGradient><linearGradient id="g212" gradientUnits="userSpaceOnUse" x1="30.5" x2="103.0"><stop offset="0" stop-color="#006bff"/><stop offset="0.276" stop-color="#005eff"/><stop offset="0.331" stop-color="#375bff"/><stop offset="0.441" stop-color="#6754ff"/><stop offset="0.662" stop-color="#a641ff"/><stop offset="0.828" stop-color="#ce2aff"/><stop offset="0.883" stop-color="#db1dff"/><stop offset="0.938" stop-color="#e800ff"/><stop offset="1" stop-color="#f600ff"/></linearGradient><linearGradient id="g213" gradientUnits="userSpaceOnUse" x1="30.5" x2="101.0"><stop offset="0" stop-color="#0069ff"/><stop offset="0.284" stop-color="#005cff"/><stop offset="0.34" stop-color="#3858ff"/><stop offset="0.454" stop-color="#6751ff"/><stop offset="0.681" stop-color="#a63dff"/><stop offset="0.851" stop-color="#ce23ff"/><stop offset="0.965" stop-color="#e700ff"/><stop offset="1" stop-color="#ef00ff"/></linearGradient><linearGradient id="g214" gradientUnits="userSpaceOnUse" x1="31.0" x2="99.0"><stop offset="0" stop-color="#0067ff"/><stop offset="0.235" stop-color="#005cff"/><stop offset="0.294" stop-color="#0c59ff"/><stop offset="0.353" stop-color="#3d55ff"/><stop offset="0.471" stop-color="#6a4eff"/><stop offset="0.765" stop-color="#b530ff"/><stop offset="0.882" stop-color="#cf19ff"/><stop offset="0.941" stop-color="#dc00ff"/><stop offset="1" stop-color="#e900ff"/></linearGradient><linearGradient id="g215" gradientUnits="userSpaceOnUse" x1="31.5" x2="96.5"><stop offset="0" stop-color="#0065ff"/><stop offset="0.246" stop-color="#0059ff"/><stop offset="0.308" stop-color="#1b56ff"/><stop offset="0.369" stop-color="#4152ff"/><stop offset="0.492" stop-color="#6d4aff"/><stop offset="0.738" stop-color="#aa32ff"/><stop offset="0.862" stop-color="#c41eff"/><stop offset="0.923" stop-color="#d100ff"/><stop offset="1" stop-color="#e000ff"/></linearGradient><linearGradient id="g216" gradientUnits="userSpaceOnUse" x1="32.0" x2="94.5"><stop offset="0" stop-color="#0062ff"/><stop offset="0.256" stop-color="#0056ff"/><stop offset="0.384" stop-color="#454fff"/><stop offset="0.512" stop-color="#6f46ff"/><stop offset="0.768" stop-color="#ab2cff"/><stop offset="0.832" stop-color="#b922ff"/><stop offset="0.96" stop-color="#d200ff"/><stop offset="1" stop-color="#da00ff"/></linearGradient><linearGradient id="g217" gradientUnits="userSpaceOnUse" x1="32.5" x2="92.5"><stop offset="0" stop-color="#0060ff"/><stop offset="0.267" stop-color="#0053ff"/><stop offset="0.333" stop-color="#2b50ff"/><stop offset="0.4" stop-color="#494cff"/><stop offset="0.6" stop-color="#823dff"/><stop offset="0.8" stop-color="#ad25ff"/><stop offset="0.867" stop-color="#ba17ff"/><stop offset="0.933" stop-color="#c700ff"/><stop offset="1" stop-color="#d300ff"/></linearGradient><linearGradient id="g218" gradientUnits="userSpaceOnUse" x1="33.0" x2="90.0"><stop offset="0" stop-color="#005dff"/><stop offset="0.281" stop-color="#0050ff"/><stop offset="0.351" stop-color="#314cff"/><stop offset="0.421" stop-color="#4d48ff"/><stop offset="0.632" stop-color="#8438ff"/><stop offset="0.842" stop-color="#af1cff"/><stop offset="0.912" stop-color="#bc00ff"/><stop offset="1" stop-color="#cb00ff"/></linearGradient><linearGradient id="g219" gradientUnits="userSpaceOnUse" x1="33.5" x2="88.0"><stop offset="0" stop-color="#005bff"/><stop offset="0.294" stop-color="#004dff"/><stop offset="0.367" stop-color="#3649ff"/><stop offset="0.44" stop-color="#5144ff"/><stop offset="0.734" stop-color="#952bff"/><stop offset="0.881" stop-color="#b00fff"/><stop offset="0.954" stop-color="#bd00ff"/><stop offset="1" stop-color="#c500ff"/></linearGradient><linearGradient id="g220" gradientUnits="userSpaceOnUse" x1="34.0" x2="86.0"><stop offset="0" stop-color="#0058ff"/><stop offset="0.231" stop-color="#004eff"/><stop offset="0.308" stop-color="#084aff"/><stop offset="0.385" stop-color="#3b45ff"/><stop offset="0.538" stop-color="#683bff"/><stop offset="0.769" stop-color="#9724ff"/><stop offset="0.846" stop-color="#a416ff"/><stop offset="0.923" stop-color="#b200ff"/><stop offset="1" stop-color="#be00ff"/></linearGradient><linearGradient id="g221" gradientUnits="userSpaceOnUse" x1="34.5" x2="83.5"><stop offset="0" stop-color="#05f"/><stop offset="0.245" stop-color="#004bff"/><stop offset="0.327" stop-color="#1946ff"/><stop offset="0.408" stop-color="#4042ff"/><stop offset="0.571" stop-color="#6a36ff"/><stop offset="0.816" stop-color="#991bff"/><stop offset="0.898" stop-color="#a600ff"/><stop offset="1" stop-color="#b600ff"/></linearGradient><linearGradient id="g222" gradientUnits="userSpaceOnUse" x1="35.0" x2="81.5"><stop offset="0" stop-color="#0052ff"/><stop offset="0.258" stop-color="#0047ff"/><stop offset="0.43" stop-color="#443eff"/><stop offset="0.688" stop-color="#7d2aff"/><stop offset="0.946" stop-color="#a800ff"/><stop offset="1" stop-color="#b000ff"/></linearGradient><linearGradient id="g223" gradientUnits="userSpaceOnUse" x1="36.0" x2="79.5"><stop offset="0" stop-color="#004fff"/><stop offset="0.276" stop-color="#0043ff"/><stop offset="0.368" stop-color="#2e3eff"/><stop offset="0.46" stop-color="#4b39ff"/><stop offset="0.736" stop-color="#8121ff"/><stop offset="0.92" stop-color="#9e00ff"/><stop offset="1" stop-color="#a900ff"/></linearGradient><linearGradient id="g224" gradientUnits="userSpaceOnUse" x1="36.5" x2="77.0"><stop offset="0" stop-color="#004cff"/><stop offset="0.296" stop-color="#003fff"/><stop offset="0.395" stop-color="#343aff"/><stop offset="0.593" stop-color="#622dff"/><stop offset="0.79" stop-color="#8318ff"/><stop offset="0.889" stop-color="#9200ff"/><stop offset="1" stop-color="#a100ff"/></linearGradient><linearGradient id="g225" gradientUnits="userSpaceOnUse" x1="37.0" x2="75.0"><stop offset="0" stop-color="#0049ff"/><stop offset="0.316" stop-color="#003bff"/><stop offset="0.421" stop-color="#3936ff"/><stop offset="0.632" stop-color="#6527ff"/><stop offset="0.737" stop-color="#761cff"/><stop offset="0.842" stop-color="#8508ff"/><stop offset="1" stop-color="#9b00ff"/></linearGradient><linearGradient id="g226" gradientUnits="userSpaceOnUse" x1="38.0" x2="73.0"><stop offset="0" stop-color="#0045ff"/><stop offset="0.229" stop-color="#003cff"/><stop offset="0.343" stop-color="#1c37ff"/><stop offset="0.457" stop-color="#4030ff"/><stop offset="0.686" stop-color="#6a1fff"/><stop offset="0.914" stop-color="#8900ff"/><stop offset="1" stop-color="#9400ff"/></linearGradient><linearGradient id="g227" gradientUnits="userSpaceOnUse" x1="38.5" x2="71.0"><stop offset="0" stop-color="#0042ff"/><stop offset="0.246" stop-color="#0038ff"/><stop offset="0.492" stop-color="#442bff"/><stop offset="0.738" stop-color="#6c15ff"/><stop offset="0.862" stop-color="#7c00ff"/><stop offset="1" stop-color="#8d00ff"/></linearGradient><linearGradient id="g228" gradientUnits="userSpaceOnUse" x1="39.5" x2="68.5"><stop offset="0" stop-color="#003eff"/><stop offset="0.276" stop-color="#03f"/><stop offset="0.414" stop-color="#302cff"/><stop offset="0.69" stop-color="#6018ff"/><stop offset="0.828" stop-color="#7100ff"/><stop offset="1" stop-color="#8400ff"/></linearGradient><linearGradient id="g229" gradientUnits="userSpaceOnUse" x1="40.0" x2="66.5"><stop offset="0" stop-color="#003aff"/><stop offset="0.302" stop-color="#002eff"/><stop offset="0.453" stop-color="#3526ff"/><stop offset="0.604" stop-color="#4f1cff"/><stop offset="0.755" stop-color="#6209ff"/><stop offset="0.906" stop-color="#7300ff"/><stop offset="1" stop-color="#7d00ff"/></linearGradient><linearGradient id="g230" gradientUnits="userSpaceOnUse" x1="41.0" x2="64.5"><stop offset="0" stop-color="#0035ff"/><stop offset="0.17" stop-color="#002fff"/><stop offset="0.34" stop-color="#1628ff"/><stop offset="0.511" stop-color="#3d1eff"/><stop offset="0.851" stop-color="#6700ff"/><stop offset="1" stop-color="#7500ff"/></linearGradient><linearGradient id="g231" gradientUnits="userSpaceOnUse" x1="42.0" x2="62.0"><stop offset="0" stop-color="#0030ff"/><stop offset="0.2" stop-color="#0029ff"/><stop offset="0.6" stop-color="#4413ff"/><stop offset="0.8" stop-color="#5a00ff"/><stop offset="1" stop-color="#6c00ff"/></linearGradient><linearGradient id="g232" gradientUnits="userSpaceOnUse" x1="43.0" x2="60.0"><stop offset="0" stop-color="#002aff"/><stop offset="0.235" stop-color="#02f"/><stop offset="0.471" stop-color="#3016ff"/><stop offset="0.706" stop-color="#4b00ff"/><stop offset="1" stop-color="#6300ff"/></linearGradient><linearGradient id="g233" gradientUnits="userSpaceOnUse" x1="44.5" x2="58.0"><stop offset="0" stop-color="#02f"/><stop offset="0.296" stop-color="#1517ff"/><stop offset="0.593" stop-color="#3c00ff"/><stop offset="1" stop-color="#5b00ff"/></linearGradient><linearGradient id="g234" gradientUnits="userSpaceOnUse" x1="45.5" x2="55.5"><stop offset="0" stop-color="#0019ff"/><stop offset="0.4" stop-color="#2500ff"/><stop offset="1" stop-color="#4f00ff"/></linearGradient><linearGradient id="g235" gradientUnits="userSpaceOnUse" x1="46.5" x2="53.5"><stop offset="0" stop-color="#000aff"/><stop offset="0.571" stop-color="#2f00ff"/><stop offset="1" stop-color="#40f"/></linearGradient><linearGradient id="g236" gradientUnits="userSpaceOnUse" x1="48.0" x2="51.5"><stop offset="0" stop-color="#1400ff"/><stop offset="1" stop-color="#3800ff"/></linearGradient></defs><path d="M49.8 254.4 L49.0 254.3 L48.3 253.8 L48.1 253.6 L47.8 253.4 L47.4 253.0 L47.1 252.7 L46.6 252.3 L46.1 251.9 L45.5 251.4 L44.8 250.8 L44.1 250.1 L43.2 249.3 L42.3 248.4 L41.3 247.4 L40.1 246.1 L38.8 244.5 L37.3 242.2 L35.6 239.4 L33.6 235.7 L31.5 231.1 L29.0 225.3 L26.3 218.1 L23.1 209.3 L19.8 198.7 L16.5 186.3 L13.2 171.9 L10.0 155.8 L7.0 138.4 L4.5 120.5 L2.6 102.7 L1.6 85.6 L1.4 69.6 L2.3 55.0 L4.3 42.4 L7.3 32.3 L11.4 24.9 L16.1 20.4 L21.4 18.7 L27.0 19.0 L32.8 20.8 L38.6 23.5 L44.3 26.6 L49.8 30.0 L55.2 33.5 L60.4 37.3 L65.6 41.3 L70.8 45.5 L75.9 49.8 L81.0 54.3 L86.1 58.9 L91.1 63.6 L96.2 68.4 L101.3 73.3 L106.4 78.2 L111.5 83.1 L116.5 88.1 L121.6 93.1 L126.6 98.0 L131.6 103.0 L136.5 107.9 L141.3 112.7 L146.1 117.4 L150.7 122.1 L155.2 126.6 L159.6 130.9 L163.9 135.2 L167.9 139.2 L171.8 143.0 L175.3 146.6 L178.6 149.9 L181.7 153.0 L184.6 155.9 L187.3 158.5 L189.7 160.8 L191.8 162.9 L193.7 164.9 L195.4 166.6 L197.0 168.1 L198.3 169.5 L199.6 170.7 L200.6 171.8 L201.6 172.8 L202.5 173.7 L203.4 174.5 L204.1 175.2 L204.8 175.9 L206.8 177.9 L207.9 179.0 L209.2 180.3Z" fill="none" stroke="#fff" stroke-opacity="0.55" stroke-width="2.5" stroke-linejoin="round"/><g clip-path="url(#hs)"><rect x="19.5" y="18" width="8.0" height="1.05" fill="url(#g0)"/><rect x="16.5" y="19" width="14.5" height="1.05" fill="url(#g1)"/><rect x="15.0" y="20" width="19.0" height="1.05" fill="url(#g2)"/><rect x="13.5" y="21" width="22.5" height="1.05" fill="url(#g3)"/><rect x="12.5" y="22" width="26.0" height="1.05" fill="url(#g4)"/><rect x="11.5" y="23" width="29.0" height="1.05" fill="url(#g5)"/><rect x="10.5" y="24" width="31.5" height="1.05" fill="url(#g6)"/><rect x="10.0" y="25" width="34.0" height="1.05" fill="url(#g7)"/><rect x="9.5" y="26" width="36.0" height="1.05" fill="url(#g8)"/><rect x="9.0" y="27" width="38.5" height="1.05" fill="url(#g9)"/><rect x="8.5" y="28" width="40.5" height="1.05" fill="url(#g10)"/><rect x="8.0" y="29" width="42.5" height="1.05" fill="url(#g11)"/><rect x="7.5" y="30" width="44.5" height="1.05" fill="url(#g12)"/><rect x="6.5" y="31" width="47.0" height="1.05" fill="url(#g13)"/><rect x="6.5" y="32" width="48.5" height="1.05" fill="url(#g14)"/><rect x="6.0" y="33" width="50.5" height="1.05" fill="url(#g15)"/><rect x="6.0" y="34" width="52.0" height="1.05" fill="url(#g16)"/><rect x="5.5" y="35" width="54.0" height="1.05" fill="url(#g17)"/><rect x="5.0" y="36" width="56.0" height="1.05" fill="url(#g18)"/><rect x="5.0" y="37" width="57.0" height="1.05" fill="url(#g19)"/><rect x="4.5" y="38" width="59.0" height="1.05" fill="url(#g20)"/><rect x="4.0" y="39" width="60.5" height="1.05" fill="url(#g21)"/><rect x="4.0" y="40" width="62.0" height="1.05" fill="url(#g22)"/><rect x="3.5" y="41" width="63.5" height="1.05" fill="url(#g23)"/><rect x="3.5" y="42" width="65.0" height="1.05" fill="url(#g24)"/><rect x="3.5" y="43" width="66.0" height="1.05" fill="url(#g25)"/><rect x="3.0" y="44" width="68.0" height="1.05" fill="url(#g26)"/><rect x="3.0" y="45" width="69.0" height="1.05" fill="url(#g27)"/><rect x="3.0" y="46" width="70.5" height="1.05" fill="url(#g28)"/><rect x="2.5" y="47" width="72.0" height="1.05" fill="url(#g29)"/><rect x="2.5" y="48" width="73.0" height="1.05" fill="url(#g30)"/><rect x="2.5" y="49" width="74.5" height="1.05" fill="url(#g31)"/><rect x="2.0" y="50" width="76.0" height="1.05" fill="url(#g32)"/><rect x="2.0" y="51" width="77.0" height="1.05" fill="url(#g33)"/><rect x="2.0" y="52" width="78.5" height="1.05" fill="url(#g34)"/><rect x="1.5" y="53" width="80.0" height="1.05" fill="url(#g35)"/><rect x="1.5" y="54" width="81.0" height="1.05" fill="url(#g36)"/><rect x="1.5" y="55" width="82.0" height="1.05" fill="url(#g37)"/><rect x="1.5" y="56" width="83.0" height="1.05" fill="url(#g38)"/><rect x="1.5" y="57" width="84.5" height="1.05" fill="url(#g39)"/><rect x="1.5" y="58" width="85.5" height="1.05" fill="url(#g40)"/><rect x="1.0" y="59" width="87.0" height="1.05" fill="url(#g41)"/><rect x="1.0" y="60" width="88.0" height="1.05" fill="url(#g42)"/><rect x="1.0" y="61" width="89.0" height="1.05" fill="url(#g43)"/><rect x="1.0" y="62" width="90.0" height="1.05" fill="url(#g44)"/><rect x="1.0" y="63" width="91.5" height="1.05" fill="url(#g45)"/><rect x="1.0" y="64" width="92.5" height="1.05" fill="url(#g46)"/><rect x="1.0" y="65" width="93.5" height="1.05" fill="url(#g47)"/><rect x="1.0" y="66" width="94.5" height="1.05" fill="url(#g48)"/><rect x="1.0" y="67" width="95.5" height="1.05" fill="url(#g49)"/><rect x="0.5" y="68" width="97.0" height="1.05" fill="url(#g50)"/><rect x="0.5" y="69" width="98.0" height="1.05" fill="url(#g51)"/><rect x="0.5" y="70" width="99.0" height="1.05" fill="url(#g52)"/><rect x="0.5" y="71" width="100.0" height="1.05" fill="url(#g53)"/><rect x="0.5" y="72" width="101.5" height="1.05" fill="url(#g54)"/><rect x="0.5" y="73" width="102.5" height="1.05" fill="url(#g55)"/><rect x="0.5" y="74" width="103.5" height="1.05" fill="url(#g56)"/><rect x="0.5" y="75" width="104.5" height="1.05" fill="url(#g57)"/><rect x="0.5" y="76" width="105.5" height="1.05" fill="url(#g58)"/><rect x="0.5" y="77" width="106.5" height="1.05" fill="url(#g59)"/><rect x="0.5" y="78" width="107.5" height="1.05" fill="url(#g60)"/><rect x="1.0" y="79" width="108.0" height="1.05" fill="url(#g61)"/><rect x="1.0" y="80" width="109.0" height="1.05" fill="url(#g62)"/><rect x="1.0" y="81" width="110.0" height="1.05" fill="url(#g63)"/><rect x="1.0" y="82" width="111.0" height="1.05" fill="url(#g64)"/><rect x="1.0" y="83" width="112.0" height="1.05" fill="url(#g65)"/><rect x="1.0" y="84" width="113.0" height="1.05" fill="url(#g66)"/><rect x="1.0" y="85" width="114.0" height="1.05" fill="url(#g67)"/><rect x="1.0" y="86" width="115.0" height="1.05" fill="url(#g68)"/><rect x="1.0" y="87" width="116.0" height="1.05" fill="url(#g69)"/><rect x="1.0" y="88" width="117.0" height="1.05" fill="url(#g70)"/><rect x="1.0" y="89" width="118.0" height="1.05" fill="url(#g71)"/><rect x="1.0" y="90" width="119.0" height="1.05" fill="url(#g72)"/><rect x="1.0" y="91" width="120.0" height="1.05" fill="url(#g73)"/><rect x="1.0" y="92" width="121.0" height="1.05" fill="url(#g74)"/><rect x="1.5" y="93" width="122.0" height="1.05" fill="url(#g75)"/><rect x="1.5" y="94" width="123.0" height="1.05" fill="url(#g76)"/><rect x="1.5" y="95" width="124.0" height="1.05" fill="url(#g77)"/><rect x="1.5" y="96" width="125.0" height="1.05" fill="url(#g78)"/><rect x="1.5" y="97" width="126.0" height="1.05" fill="url(#g79)"/><rect x="1.5" y="98" width="127.0" height="1.05" fill="url(#g80)"/><rect x="1.5" y="99" width="128.0" height="1.05" fill="url(#g81)"/><rect x="1.5" y="100" width="129.0" height="1.05" fill="url(#g82)"/><rect x="2.0" y="101" width="129.5" height="1.05" fill="url(#g83)"/><rect x="2.0" y="102" width="130.5" height="1.05" fill="url(#g84)"/><rect x="2.0" y="103" width="131.5" height="1.05" fill="url(#g85)"/><rect x="2.0" y="104" width="132.5" height="1.05" fill="url(#g86)"/><rect x="2.0" y="105" width="133.5" height="1.05" fill="url(#g87)"/><rect x="2.0" y="106" width="134.5" height="1.05" fill="url(#g88)"/><rect x="2.5" y="107" width="135.0" height="1.05" fill="url(#g89)"/><rect x="2.5" y="108" width="136.0" height="1.05" fill="url(#g90)"/><rect x="2.5" y="109" width="137.0" height="1.05" fill="url(#g91)"/><rect x="2.5" y="110" width="138.0" height="1.05" fill="url(#g92)"/><rect x="2.5" y="111" width="139.0" height="1.05" fill="url(#g93)"/><rect x="3.0" y="112" width="139.5" height="1.05" fill="url(#g94)"/><rect x="3.0" y="113" width="140.5" height="1.05" fill="url(#g95)"/><rect x="3.0" y="114" width="141.5" height="1.05" fill="url(#g96)"/><rect x="3.0" y="115" width="142.5" height="1.05" fill="url(#g97)"/><rect x="3.5" y="116" width="143.0" height="1.05" fill="url(#g98)"/><rect x="3.5" y="117" width="144.0" height="1.05" fill="url(#g99)"/><rect x="3.5" y="118" width="145.0" height="1.05" fill="url(#g100)"/><rect x="3.5" y="119" width="146.0" height="1.05" fill="url(#g101)"/><rect x="3.5" y="120" width="147.0" height="1.05" fill="url(#g102)"/><rect x="4.0" y="121" width="147.5" height="1.05" fill="url(#g103)"/><rect x="4.0" y="122" width="148.5" height="1.05" fill="url(#g104)"/><rect x="4.0" y="123" width="149.5" height="1.05" fill="url(#g105)"/><rect x="4.0" y="124" width="150.5" height="1.05" fill="url(#g106)"/><rect x="4.5" y="125" width="151.0" height="1.05" fill="url(#g107)"/><rect x="4.5" y="126" width="152.0" height="1.05" fill="url(#g108)"/><rect x="4.5" y="127" width="153.0" height="1.05" fill="url(#g109)"/><rect x="5.0" y="128" width="153.5" height="1.05" fill="url(#g110)"/><rect x="5.0" y="129" width="154.5" height="1.05" fill="url(#g111)"/><rect x="5.0" y="130" width="155.5" height="1.05" fill="url(#g112)"/><rect x="5.0" y="131" width="156.5" height="1.05" fill="url(#g113)"/><rect x="5.5" y="132" width="157.0" height="1.05" fill="url(#g114)"/><rect x="5.5" y="133" width="158.0" height="1.05" fill="url(#g115)"/><rect x="5.5" y="134" width="159.0" height="1.05" fill="url(#g116)"/><rect x="6.0" y="135" width="159.5" height="1.05" fill="url(#g117)"/><rect x="6.0" y="136" width="160.5" height="1.05" fill="url(#g118)"/><rect x="6.0" y="137" width="161.5" height="1.05" fill="url(#g119)"/><rect x="6.0" y="138" width="162.5" height="1.05" fill="url(#g120)"/><rect x="6.5" y="139" width="163.0" height="1.05" fill="url(#g121)"/><rect x="6.5" y="140" width="164.0" height="1.05" fill="url(#g122)"/><rect x="6.5" y="141" width="165.0" height="1.05" fill="url(#g123)"/><rect x="7.0" y="142" width="165.5" height="1.05" fill="url(#g124)"/><rect x="7.0" y="143" width="166.5" height="1.05" fill="url(#g125)"/><rect x="7.0" y="144" width="167.5" height="1.05" fill="url(#g126)"/><rect x="7.5" y="145" width="168.0" height="1.05" fill="url(#g127)"/><rect x="7.5" y="146" width="169.0" height="1.05" fill="url(#g128)"/><rect x="7.5" y="147" width="170.0" height="1.05" fill="url(#g129)"/><rect x="8.0" y="148" width="170.5" height="1.05" fill="url(#g130)"/><rect x="8.0" y="149" width="171.5" height="1.05" fill="url(#g131)"/><rect x="8.0" y="150" width="172.5" height="1.05" fill="url(#g132)"/><rect x="8.5" y="151" width="173.0" height="1.05" fill="url(#g133)"/><rect x="8.5" y="152" width="174.0" height="1.05" fill="url(#g134)"/><rect x="8.5" y="153" width="175.0" height="1.05" fill="url(#g135)"/><rect x="9.0" y="154" width="175.5" height="1.05" fill="url(#g136)"/><rect x="9.0" y="155" width="176.5" height="1.05" fill="url(#g137)"/><rect x="9.5" y="156" width="177.0" height="1.05" fill="url(#g138)"/><rect x="9.5" y="157" width="178.0" height="1.05" fill="url(#g139)"/><rect x="9.5" y="158" width="179.0" height="1.05" fill="url(#g140)"/><rect x="10.0" y="159" width="179.5" height="1.05" fill="url(#g141)"/><rect x="10.0" y="160" width="180.5" height="1.05" fill="url(#g142)"/><rect x="10.5" y="161" width="181.0" height="1.05" fill="url(#g143)"/><rect x="10.5" y="162" width="182.0" height="1.05" fill="url(#g144)"/><rect x="10.5" y="163" width="183.0" height="1.05" fill="url(#g145)"/><rect x="11.0" y="164" width="183.5" height="1.05" fill="url(#g146)"/><rect x="11.0" y="165" width="184.5" height="1.05" fill="url(#g147)"/><rect x="11.5" y="166" width="185.0" height="1.05" fill="url(#g148)"/><rect x="11.5" y="167" width="186.0" height="1.05" fill="url(#g149)"/><rect x="11.5" y="168" width="187.0" height="1.05" fill="url(#g150)"/><rect x="12.0" y="169" width="187.5" height="1.05" fill="url(#g151)"/><rect x="12.0" y="170" width="188.5" height="1.05" fill="url(#g152)"/><rect x="12.5" y="171" width="189.0" height="1.05" fill="url(#g153)"/><rect x="12.5" y="172" width="190.0" height="1.05" fill="url(#g154)"/><rect x="12.5" y="173" width="191.0" height="1.05" fill="url(#g155)"/><rect x="13.0" y="174" width="191.5" height="1.05" fill="url(#g156)"/><rect x="13.0" y="175" width="192.5" height="1.05" fill="url(#g157)"/><rect x="13.5" y="176" width="193.0" height="1.05" fill="url(#g158)"/><rect x="13.5" y="177" width="194.0" height="1.05" fill="url(#g159)"/><rect x="14.0" y="178" width="194.5" height="1.05" fill="url(#g160)"/><rect x="14.0" y="179" width="195.5" height="1.05" fill="url(#g161)"/><rect x="14.5" y="180" width="195.0" height="1.05" fill="url(#g162)"/><rect x="14.5" y="181" width="194.0" height="1.05" fill="url(#g163)"/><rect x="15.0" y="182" width="191.5" height="1.05" fill="url(#g164)"/><rect x="15.0" y="183" width="189.5" height="1.05" fill="url(#g165)"/><rect x="15.0" y="184" width="187.0" height="1.05" fill="url(#g166)"/><rect x="15.5" y="185" width="184.5" height="1.05" fill="url(#g167)"/><rect x="15.5" y="186" width="182.5" height="1.05" fill="url(#g168)"/><rect x="16.0" y="187" width="179.5" height="1.05" fill="url(#g169)"/><rect x="16.0" y="188" width="177.5" height="1.05" fill="url(#g170)"/><rect x="16.5" y="189" width="175.0" height="1.05" fill="url(#g171)"/><rect x="17.0" y="190" width="172.0" height="1.05" fill="url(#g172)"/><rect x="17.0" y="191" width="170.0" height="1.05" fill="url(#g173)"/><rect x="17.5" y="192" width="167.5" height="1.05" fill="url(#g174)"/><rect x="17.5" y="193" width="165.5" height="1.05" fill="url(#g175)"/><rect x="18.0" y="194" width="162.5" height="1.05" fill="url(#g176)"/><rect x="18.0" y="195" width="160.5" height="1.05" fill="url(#g177)"/><rect x="18.5" y="196" width="158.0" height="1.05" fill="url(#g178)"/><rect x="18.5" y="197" width="155.5" height="1.05" fill="url(#g179)"/><rect x="19.0" y="198" width="153.0" height="1.05" fill="url(#g180)"/><rect x="19.0" y="199" width="151.0" height="1.05" fill="url(#g181)"/><rect x="19.5" y="200" width="148.0" height="1.05" fill="url(#g182)"/><rect x="20.0" y="201" width="145.5" height="1.05" fill="url(#g183)"/><rect x="20.0" y="202" width="143.5" height="1.05" fill="url(#g184)"/><rect x="20.5" y="203" width="140.5" height="1.05" fill="url(#g185)"/><rect x="20.5" y="204" width="138.5" height="1.05" fill="url(#g186)"/><rect x="21.0" y="205" width="136.0" height="1.05" fill="url(#g187)"/><rect x="21.5" y="206" width="133.5" height="1.05" fill="url(#g188)"/><rect x="21.5" y="207" width="131.0" height="1.05" fill="url(#g189)"/><rect x="22.0" y="208" width="128.5" height="1.05" fill="url(#g190)"/><rect x="22.5" y="209" width="126.0" height="1.05" fill="url(#g191)"/><rect x="22.5" y="210" width="123.5" height="1.05" fill="url(#g192)"/><rect x="23.0" y="211" width="121.0" height="1.05" fill="url(#g193)"/><rect x="23.5" y="212" width="118.5" height="1.05" fill="url(#g194)"/><rect x="23.5" y="213" width="116.0" height="1.05" fill="url(#g195)"/><rect x="24.0" y="214" width="113.5" height="1.05" fill="url(#g196)"/><rect x="24.5" y="215" width="111.0" height="1.05" fill="url(#g197)"/><rect x="25.0" y="216" width="108.0" height="1.05" fill="url(#g198)"/><rect x="25.0" y="217" width="106.0" height="1.05" fill="url(#g199)"/><rect x="25.5" y="218" width="103.5" height="1.05" fill="url(#g200)"/><rect x="26.0" y="219" width="101.0" height="1.05" fill="url(#g201)"/><rect x="26.5" y="220" width="98.0" height="1.05" fill="url(#g202)"/><rect x="26.5" y="221" width="96.0" height="1.05" fill="url(#g203)"/><rect x="27.0" y="222" width="93.5" height="1.05" fill="url(#g204)"/><rect x="27.5" y="223" width="90.5" height="1.05" fill="url(#g205)"/><rect x="28.0" y="224" width="88.0" height="1.05" fill="url(#g206)"/><rect x="28.0" y="225" width="86.0" height="1.05" fill="url(#g207)"/><rect x="28.5" y="226" width="83.0" height="1.05" fill="url(#g208)"/><rect x="29.0" y="227" width="80.5" height="1.05" fill="url(#g209)"/><rect x="29.5" y="228" width="78.0" height="1.05" fill="url(#g210)"/><rect x="30.0" y="229" width="75.0" height="1.05" fill="url(#g211)"/><rect x="30.5" y="230" width="72.5" height="1.05" fill="url(#g212)"/><rect x="30.5" y="231" width="70.5" height="1.05" fill="url(#g213)"/><rect x="31.0" y="232" width="68.0" height="1.05" fill="url(#g214)"/><rect x="31.5" y="233" width="65.0" height="1.05" fill="url(#g215)"/><rect x="32.0" y="234" width="62.5" height="1.05" fill="url(#g216)"/><rect x="32.5" y="235" width="60.0" height="1.05" fill="url(#g217)"/><rect x="33.0" y="236" width="57.0" height="1.05" fill="url(#g218)"/><rect x="33.5" y="237" width="54.5" height="1.05" fill="url(#g219)"/><rect x="34.0" y="238" width="52.0" height="1.05" fill="url(#g220)"/><rect x="34.5" y="239" width="49.0" height="1.05" fill="url(#g221)"/><rect x="35.0" y="240" width="46.5" height="1.05" fill="url(#g222)"/><rect x="36.0" y="241" width="43.5" height="1.05" fill="url(#g223)"/><rect x="36.5" y="242" width="40.5" height="1.05" fill="url(#g224)"/><rect x="37.0" y="243" width="38.0" height="1.05" fill="url(#g225)"/><rect x="38.0" y="244" width="35.0" height="1.05" fill="url(#g226)"/><rect x="38.5" y="245" width="32.5" height="1.05" fill="url(#g227)"/><rect x="39.5" y="246" width="29.0" height="1.05" fill="url(#g228)"/><rect x="40.0" y="247" width="26.5" height="1.05" fill="url(#g229)"/><rect x="41.0" y="248" width="23.5" height="1.05" fill="url(#g230)"/><rect x="42.0" y="249" width="20.0" height="1.05" fill="url(#g231)"/><rect x="43.0" y="250" width="17.0" height="1.05" fill="url(#g232)"/><rect x="44.5" y="251" width="13.5" height="1.05" fill="url(#g233)"/><rect x="45.5" y="252" width="10.0" height="1.05" fill="url(#g234)"/><rect x="46.5" y="253" width="7.0" height="1.05" fill="url(#g235)"/><rect x="48.0" y="254" width="3.5" height="1.05" fill="url(#g236)"/></g>
<g stroke="#000" stroke-opacity="0.075" stroke-width="1" shape-rendering="crispEdges">
<path d="M28.5 0V256M0 28.5H256"/><path d="M57.5 0V256M0 57.5H256"/><path d="M85.5 0V256M0 85.5H256"/><path d="M113.5 0V256M0 113.5H256"/><path d="M142.5 0V256M0 142.5H256"/><path d="M170.5 0V256M0 170.5H256"/><path d="M198.5 0V256M0 198.5H256"/><path d="M227.5 0V256M0 227.5H256"/>
</g>
<g font-family="Liberation Sans" font-size="8" fill="#000" fill-opacity="0.95">
<text x="3.2" y="8.6" font-size="8" font-weight="bold">y</text><text x="249" y="253">x</text>
<text x="2.8" y="31.4">0.8</text><text x="2.8" y="88.4">0.6</text><text x="2.8" y="145.4">0.4</text><text x="2.8" y="201.4">0.2</text><text x="3" y="253">0</text>
<text x="57.5" y="253" text-anchor="middle">0.2</text><text x="113.5" y="253" text-anchor="middle">0.4</text><text x="170.5" y="253" text-anchor="middle">0.6</text><text x="227.5" y="253" text-anchor="middle">0.8</text>
</g>
<g fill="none">
<polyline points="42.8,237.8 90.8,86.2 175.8,159.6" stroke="#b87420" stroke-opacity="0.68" stroke-width="1.2"/>
<polygon points="70.0,96.2 130.5,114.0 175.6,159.6 156.3,176.2 136.0,186.4 60.5,210.8 43.8,180.9" stroke="#fcfcfc" stroke-opacity="0.95" stroke-width="1.1"/>
<polygon points="77.5,75.2 187.6,163.3 41.4,238.8" stroke="#000" stroke-width="1" />
</g>
<g font-family="Liberation Sans" font-size="10">
<text x="173" y="55">Monitor</text>
<text x="173" y="68.3" fill="#eca25c">sRGB</text>
<text x="173.3" y="81.6" fill="#fafafa" textLength="45">ISOcoated</text>
</g>
<rect x="0.5" y="0.5" width="255" height="255" fill="none" stroke="#000" stroke-width="1"/>
</svg>
<!-- Bar chart -->
<div class="a" id="bc" style="left:343px;top:102px;width:256px;height:256px;box-sizing:border-box;border:1px solid #000;overflow:hidden;background:linear-gradient(180deg,#e2521a 0%,#e25518 4%,#e8701a 15%,#eda01a 28%,#ecd21c 38%,#e6ea1c 46%,#c8e01c 56%,#9cc81a 66%,#6aaa14 80%,#3c8c10 92%,#2e820e 100%)">
<div class="a" style="left:0;top:211px;width:254px;height:1px;background:rgba(0,0,0,.12)"></div><div class="a" style="left:0;top:160px;width:254px;height:1px;background:rgba(0,0,0,.12)"></div><div class="a" style="left:0;top:109px;width:254px;height:1px;background:rgba(0,0,0,.12)"></div><div class="a" style="left:0;top:58px;width:254px;height:1px;background:rgba(0,0,0,.12)"></div><div class="bar" style="left:44px;top:222px;height:32px;background:#333"></div><div class="bar" style="left:56px;top:184px;height:70px;background:#444"></div><div class="bar" style="left:68px;top:94px;height:160px;background:#888"></div><div class="bar" style="left:80px;top:56px;height:198px;background:#c0c0c0"></div><div class="bar" style="left:104px;top:-13px;height:267px;background:#f00"></div><div class="bar" style="left:116px;top:-13px;height:267px;background:#0f0"></div><div class="bar" style="left:128px;top:120px;height:134px;background:#0000e6"></div><div class="bar" style="left:140px;top:-13px;height:267px;background:#0ff"></div><div class="bar" style="left:152px;top:-13px;height:267px;background:#f0f"></div><div class="bar" style="left:164px;top:163px;height:91px;background:#ff0"></div><div class="bar" style="left:176px;top:-13px;height:267px;background:#a85858"></div><div class="bar" style="left:188px;top:-13px;height:267px;background:#58a858"></div><div class="bar" style="left:200px;top:156px;height:98px;background:#5858a8"></div><div class="bar" style="left:212px;top:-13px;height:267px;background:#58a8a8"></div><div class="bar" style="left:224px;top:69px;height:185px;background:#a858a8"></div><div class="bar" style="left:236px;top:56px;height:198px;background:#a8a858"></div><div class="t" style="left:0.7px;top:1.2px;font-size:8px;color:rgba(20,0,0,.8)">10 d E 94</div><div class="t" style="left:0.7px;top:55.2px;font-size:8px;color:rgba(20,0,0,.8)">8 d E 94</div><div class="t" style="left:0.7px;top:106.2px;font-size:8px;color:rgba(20,0,0,.8)">6 d E 94</div><div class="t" style="left:0.7px;top:157.2px;font-size:8px;color:rgba(20,0,0,.8)">4 d E 94</div><div class="t" style="left:0.7px;top:208.2px;font-size:8px;color:rgba(20,0,0,.8)">2 d E 94</div>
</div>
<!-- table -->
<div class="t r" style="left:131.4px;top:370px">Target</div>
<div class="t r" style="left:195px;top:370px">Current</div>
<div class="t r" style="left:259px;top:370px">Deviation</div>
<div class="t r" style="left:67.6px;top:385px">Gamma</div>
<div class="t r" style="left:67.6px;top:400px">Kelvin</div>
<div class="t r" style="left:67.6px;top:415px">cd/m2</div>
<div class="t r" style="left:131px;top:385px">2.2</div>
<div class="t r" style="left:131px;top:400px">6500</div>
<div class="t r" style="left:131px;top:415px">120</div>
<div class="t r o" style="left:195px;top:385px">1.8</div>
<div class="t r o" style="left:195px;top:400px">8177</div>
<div class="t r o" style="left:195px;top:415px">73</div>
<div class="t r o" style="left:259px;top:385px">18%</div>
<div class="t r o" style="left:259px;top:400px">26%</div>
<div class="t r o" style="left:259px;top:415px">39%</div>
<div class="t r" style="left:343.6px;top:370px">Delta E Average</div>
<div class="t r" style="left:343.6px;top:385px">Delta E Maximum</div>
<div class="t r o" style="left:454px;top:370px">7.7</div>
<div class="t r o" style="left:454px;top:385px">14.2</div>
<!-- buttons -->
<div class="btn" style="left:20px;top:492px;padding-right:1px">Main Menu</div>
<div class="btn" style="left:105px;top:492px;letter-spacing:-0.1px">Calibration</div>
<div class="btn" style="left:486px;top:492px;padding-right:2px">Save</div>
<div class="btn" style="left:571px;top:492px;padding-right:3px">Quit</div>
</body></html>
